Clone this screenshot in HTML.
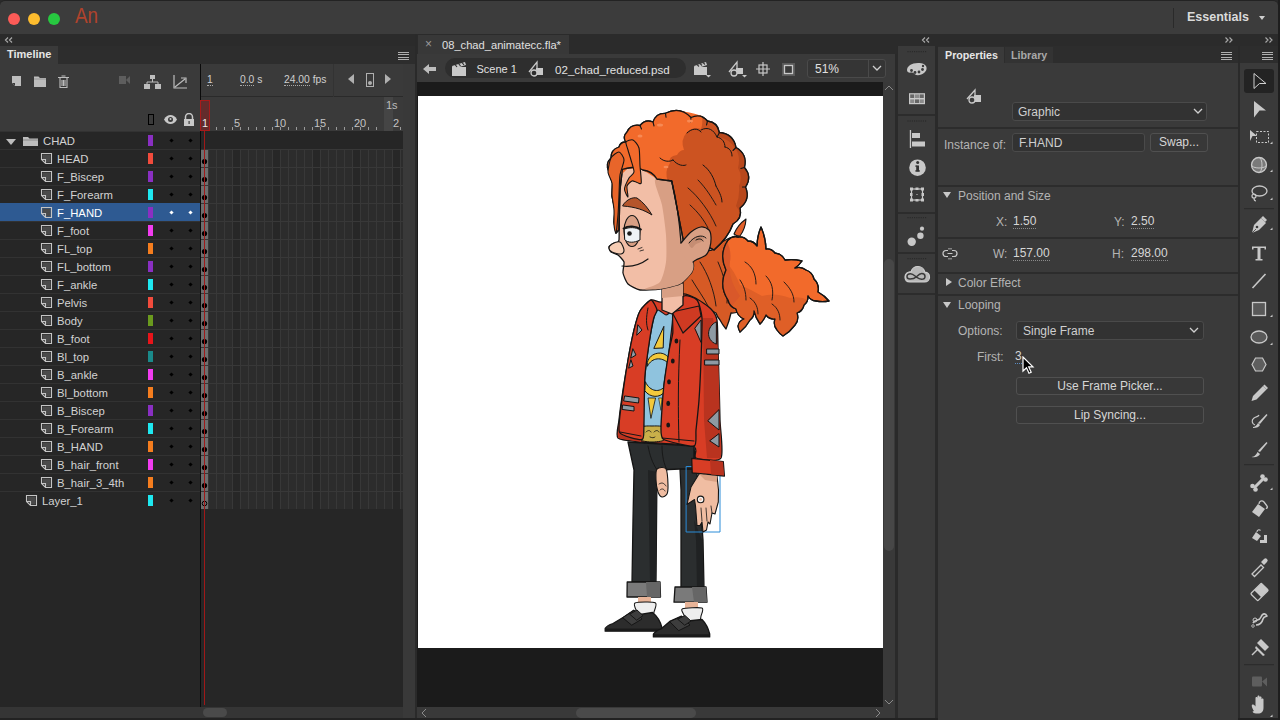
<!DOCTYPE html>
<html><head><meta charset="utf-8">
<style>
*{margin:0;padding:0;box-sizing:border-box}
html,body{width:1280px;height:720px;overflow:hidden;background:#2a2a2a;font-family:"Liberation Sans",sans-serif;color:#d6d6d6;font-size:12px}
.a{position:absolute}
#title{left:0;top:0;width:1278px;height:34px;background:#3c3c3c;border-top:1px solid #232323;border-radius:5px 5px 0 0}
.tl{position:absolute;top:12px;width:12px;height:12px;border-radius:50%}
.strip{background:#2b2b2b}
.panel{background:#3a3a3a}
.row{position:absolute;left:0;width:200px;height:18px;background:#262626;border-top:1px solid #323232}
.row.sel{background:#2e5a92;border-top-color:#2e5a92}
.row .lname{position:absolute;top:2.5px;font-size:11.3px;color:#d2d2d2;white-space:nowrap}
.row.sel .lname{color:#fff}
.row .sw{position:absolute;left:148px;top:3px;width:5px;height:11px}
.row .dot{position:absolute;top:7px;width:3px;height:3px;background:#000;transform:rotate(45deg)}
.row.sel .dot{background:#fff}
.row .d1{left:170px}.row .d2{left:189px}
.row .lic{position:absolute;top:2px}
.row .tri{position:absolute;left:6px;top:7px;width:0;height:0;border-left:5.5px solid transparent;border-right:5.5px solid transparent;border-top:6px solid #bdbdbd}
.row .fold{position:absolute;left:22px;top:3px}
.menu{position:absolute;width:11px;height:8px;background:repeating-linear-gradient(to bottom,#b0b0b0 0,#b0b0b0 1.1px,transparent 1.1px,transparent 2.3px)}
.chev{position:absolute;font-size:10px;color:#9a9a9a;letter-spacing:-1px}
.ptxt{position:absolute;font-size:12px;color:#cfcfcf;white-space:nowrap}
.lbl{position:absolute;font-size:12px;color:#b4b4b4;white-space:nowrap}
.val{position:absolute;font-size:12px;color:#d6d6d6;white-space:nowrap;border-bottom:1px dotted #8a8a8a;line-height:13px}
.field{position:absolute;background:#323232;border:1px solid #4a4a4a;border-radius:3px}
.btn{position:absolute;background:#383838;border:1px solid #505050;border-radius:3px;text-align:center;font-size:12px;color:#d6d6d6}
.sep{position:absolute;height:2px;background:#2c2c2c}
</style></head><body>
<!-- title bar -->
<div id="title" class="a">
 <div class="tl" style="left:8px;background:#fc5b57"></div>
 <div class="tl" style="left:28px;background:#fdbc2e"></div>
 <div class="tl" style="left:48px;background:#27c840"></div>
 <div class="a" style="left:75px;top:2px;font-size:22px;color:#b0432c;transform:scaleX(0.86);transform-origin:0 0">An</div>
 <div class="a" style="left:1173px;top:7px;width:1px;height:20px;background:#2a2a2a"></div>
 <div class="a" style="left:1187px;top:9px;font-size:12.5px;font-weight:bold;color:#dadada">Essentials</div>
 <div class="a" style="left:1259px;top:15px;border-left:3px solid transparent;border-right:3px solid transparent;border-top:4px solid #cfcfcf"></div>
</div>

<!-- ============ LEFT: Timeline ============ -->
<div class="a strip" style="left:0;top:34px;width:415px;height:12px"></div>
<svg class="a" style="left:4px;top:36px" width="10" height="8" viewBox="0 0 10 8"><path d="M4 1.5L1.5 4 4 6.5M8 1.5L5.5 4 8 6.5" stroke="#a8a8a8" stroke-width="1.2" fill="none"/></svg>
<div class="a" style="left:0;top:46px;width:415px;height:18px;background:#2d2d2d"></div>
<div class="a panel" style="left:0;top:46px;width:58px;height:18px"></div>
<div class="a" style="left:7px;top:48px;font-size:11px;font-weight:bold;color:#e6e6e6">Timeline</div>
<div class="menu" style="left:398px;top:52px"></div>
<div class="a panel" style="left:0;top:64px;width:200px;height:67px"></div>
<div class="a panel" style="left:201px;top:64px;width:202px;height:67px"></div>
<div class="a" style="left:200px;top:64px;width:1px;height:643px;background:#0a0a0a"></div>
<div class="a" style="left:201px;top:96px;width:202px;height:1px;background:#2a2a2a"></div>
<div class="a" style="left:333px;top:64px;width:1px;height:33px;background:#333"></div>
<!-- frame info -->
<div class="a" style="left:207px;top:74px;font-size:10.3px;color:#cfcfcf;border-bottom:1px dotted #aaa;line-height:11px">1</div>
<div class="a" style="left:240px;top:74px;font-size:10.3px;color:#cfcfcf;line-height:11px"><span style="border-bottom:1px dotted #aaa">0.0</span> s</div>
<div class="a" style="left:284px;top:74px;font-size:10.3px;color:#cfcfcf;line-height:11px"><span style="border-bottom:1px dotted #aaa">24.00</span> fps</div>
<div class="a" style="left:348px;top:74px;border-top:5px solid transparent;border-bottom:5px solid transparent;border-right:6px solid #b0b0b0"></div>
<div class="a" style="left:366px;top:73px;width:8px;height:14px;border:1px solid #b0b0b0"><div class="a" style="left:1px;top:7px;width:4px;height:4px;border-radius:50%;background:#b0b0b0"></div></div>
<div class="a" style="left:385px;top:74px;border-top:5px solid transparent;border-bottom:5px solid transparent;border-left:6px solid #b0b0b0"></div>
<!-- left toolbar icons -->
<svg class="a" style="left:10px;top:74px" width="60" height="16" viewBox="0 0 60 16">
 <path d="M2 2h9v10H5l-3-3z" fill="#bdbdbd"/><path d="M2 9l3 3V9z" fill="#3a3a3a"/>
 <path d="M24 2.5h4.5l1.5 1.5h6V13H24z" fill="#bdbdbd"/><path d="M24 5h12" stroke="#8e8e8e" stroke-width="0.8"/>
 <path d="M48 3.5h11M50 4v9.5h7V4M51.5 2h4M52 6v6M53.5 6v6M55 6v6" stroke="#bdbdbd" stroke-width="1.1" fill="none"/>
</svg>
<svg class="a" style="left:116px;top:73px" width="80" height="18" viewBox="0 0 80 18">
 <rect x="3" y="3" width="7" height="8" fill="#5e5e5e"/><path d="M10 7l4-4v8z" fill="#5e5e5e"/>
 <rect x="34" y="2" width="5" height="4" fill="#bdbdbd"/><path d="M36.5 6v3M31 9h11M31 9v3M42 9v3" stroke="#bdbdbd" stroke-width="1" fill="none"/><rect x="28" y="11" width="6" height="5" fill="#bdbdbd"/><rect x="39" y="11" width="6" height="5" fill="#bdbdbd"/>
 <path d="M58 2v13h13M59 14l10-8M65 5h5v5" stroke="#bdbdbd" stroke-width="1.2" fill="none"/>
</svg>
<!-- header column icons -->
<div class="a" style="left:148px;top:114px;width:6px;height:11px;border:1.5px solid #000"></div>
<svg class="a" style="left:163px;top:113px" width="34" height="14" viewBox="0 0 34 14">
 <path d="M1 6.5C3 3 5 2 7.5 2S12 3 14 6.5C12 10 10 11 7.5 11S3 10 1 6.5z" fill="#c8c8c8"/><circle cx="7.5" cy="6.5" r="2.5" fill="#3a3a3a"/><circle cx="7.5" cy="6" r="1" fill="#c8c8c8"/>
 <path d="M22.5 6V4a3.5 3.5 0 0 1 7 0v2" stroke="#c8c8c8" stroke-width="1.5" fill="none"/><rect x="21" y="6" width="10" height="7" fill="#c8c8c8"/><rect x="25.5" y="8" width="1.2" height="3" fill="#3a3a3a"/>
</svg>
<svg style="position:absolute;left:201px;top:97px" width="202" height="34"><rect x="15" y="30" width="1" height="3" fill="#9a9a9a"/><rect x="23" y="30" width="1" height="3" fill="#9a9a9a"/><rect x="31" y="30" width="1" height="3" fill="#9a9a9a"/><rect x="39" y="30" width="1" height="3" fill="#9a9a9a"/><rect x="47" y="30" width="1" height="3" fill="#9a9a9a"/><rect x="55" y="30" width="1" height="3" fill="#9a9a9a"/><rect x="63" y="30" width="1" height="3" fill="#9a9a9a"/><rect x="71" y="30" width="1" height="3" fill="#9a9a9a"/><rect x="79" y="30" width="1" height="3" fill="#9a9a9a"/><rect x="87" y="30" width="1" height="3" fill="#9a9a9a"/><rect x="95" y="30" width="1" height="3" fill="#9a9a9a"/><rect x="103" y="30" width="1" height="3" fill="#9a9a9a"/><rect x="111" y="30" width="1" height="3" fill="#9a9a9a"/><rect x="119" y="30" width="1" height="3" fill="#9a9a9a"/><rect x="127" y="30" width="1" height="3" fill="#9a9a9a"/><rect x="135" y="30" width="1" height="3" fill="#9a9a9a"/><rect x="143" y="30" width="1" height="3" fill="#9a9a9a"/><rect x="151" y="30" width="1" height="3" fill="#9a9a9a"/><rect x="159" y="30" width="1" height="3" fill="#9a9a9a"/><rect x="167" y="30" width="1" height="3" fill="#9a9a9a"/><rect x="175" y="30" width="1" height="3" fill="#9a9a9a"/><rect x="183" y="30" width="1" height="3" fill="#9a9a9a"/><rect x="191" y="30" width="1" height="3" fill="#9a9a9a"/><rect x="199" y="30" width="1" height="3" fill="#9a9a9a"/><rect x="207" y="30" width="1" height="3" fill="#9a9a9a"/></svg>
<div class="a" style="left:384px;top:97px;width:9px;height:34px;background:#454545"></div>
<div class="a" style="left:386px;top:99px;font-size:11px;color:#bdbdbd">1s</div>
<div class="a" style="left:200px;top:100px;width:10px;height:31px;border:1.5px solid #a81a1a;background:rgba(140,30,30,0.5)"></div>
<div class="a" style="left:201px;top:117px;font-size:11px;color:#c4c4c4;width:202px;height:14px">
 <span class="a" style="left:1px;color:#e8e8e8">1</span><span class="a" style="left:33px">5</span><span class="a" style="left:73px">10</span><span class="a" style="left:113px">15</span><span class="a" style="left:153px">20</span><span class="a" style="left:192px">2</span>
</div>
<!-- rows -->
<div class="row folder" style="top:131px"><div class="tri"></div><svg class="fold" width="17" height="12" viewBox="0 0 17 12"><path d="M1 2h5l1.5 1.5H16V11H1z" fill="#bdbdbd"/><path d="M1 5h15" stroke="#8a8a8a" stroke-width="1"/></svg><span class="lname" style="left:43px">CHAD</span><div class="sw" style="background:#8a2fc2"></div><div class="dot d1"></div><div class="dot d2"></div></div>
<div class="row" style="top:149px"><svg class="lic" style="left:40px" width="13" height="13" viewBox="0 0 13 13"><path d="M2.5 2.5h8v8h-4.5l-3.5-3.5z" fill="#4a4a4a"/><path d="M1.5 1.5h10v10h-6l-4-4z M5.5 11.5v-4h-4" fill="none" stroke="#c4c4c4" stroke-width="1.1"/></svg><span class="lname" style="left:57px">HEAD</span><div class="sw" style="background:#f24b3c"></div><div class="dot d1"></div><div class="dot d2"></div></div>
<div class="row" style="top:167px"><svg class="lic" style="left:40px" width="13" height="13" viewBox="0 0 13 13"><path d="M2.5 2.5h8v8h-4.5l-3.5-3.5z" fill="#4a4a4a"/><path d="M1.5 1.5h10v10h-6l-4-4z M5.5 11.5v-4h-4" fill="none" stroke="#c4c4c4" stroke-width="1.1"/></svg><span class="lname" style="left:57px">F_Biscep</span><div class="sw" style="background:#8a2fc2"></div><div class="dot d1"></div><div class="dot d2"></div></div>
<div class="row" style="top:185px"><svg class="lic" style="left:40px" width="13" height="13" viewBox="0 0 13 13"><path d="M2.5 2.5h8v8h-4.5l-3.5-3.5z" fill="#4a4a4a"/><path d="M1.5 1.5h10v10h-6l-4-4z M5.5 11.5v-4h-4" fill="none" stroke="#c4c4c4" stroke-width="1.1"/></svg><span class="lname" style="left:57px">F_Forearm</span><div class="sw" style="background:#1ee8f0"></div><div class="dot d1"></div><div class="dot d2"></div></div>
<div class="row sel" style="top:203px"><svg class="lic" style="left:40px" width="13" height="13" viewBox="0 0 13 13"><path d="M2.5 2.5h8v8h-4.5l-3.5-3.5z" fill="#4a4a4a"/><path d="M1.5 1.5h10v10h-6l-4-4z M5.5 11.5v-4h-4" fill="none" stroke="#c4c4c4" stroke-width="1.1"/></svg><span class="lname" style="left:57px">F_HAND</span><div class="sw" style="background:#8a2fc2"></div><div class="dot d1"></div><div class="dot d2"></div></div>
<div class="row" style="top:221px"><svg class="lic" style="left:40px" width="13" height="13" viewBox="0 0 13 13"><path d="M2.5 2.5h8v8h-4.5l-3.5-3.5z" fill="#4a4a4a"/><path d="M1.5 1.5h10v10h-6l-4-4z M5.5 11.5v-4h-4" fill="none" stroke="#c4c4c4" stroke-width="1.1"/></svg><span class="lname" style="left:57px">F_foot</span><div class="sw" style="background:#f23cf0"></div><div class="dot d1"></div><div class="dot d2"></div></div>
<div class="row" style="top:239px"><svg class="lic" style="left:40px" width="13" height="13" viewBox="0 0 13 13"><path d="M2.5 2.5h8v8h-4.5l-3.5-3.5z" fill="#4a4a4a"/><path d="M1.5 1.5h10v10h-6l-4-4z M5.5 11.5v-4h-4" fill="none" stroke="#c4c4c4" stroke-width="1.1"/></svg><span class="lname" style="left:57px">FL_top</span><div class="sw" style="background:#f57d1e"></div><div class="dot d1"></div><div class="dot d2"></div></div>
<div class="row" style="top:257px"><svg class="lic" style="left:40px" width="13" height="13" viewBox="0 0 13 13"><path d="M2.5 2.5h8v8h-4.5l-3.5-3.5z" fill="#4a4a4a"/><path d="M1.5 1.5h10v10h-6l-4-4z M5.5 11.5v-4h-4" fill="none" stroke="#c4c4c4" stroke-width="1.1"/></svg><span class="lname" style="left:57px">FL_bottom</span><div class="sw" style="background:#8a2fc2"></div><div class="dot d1"></div><div class="dot d2"></div></div>
<div class="row" style="top:275px"><svg class="lic" style="left:40px" width="13" height="13" viewBox="0 0 13 13"><path d="M2.5 2.5h8v8h-4.5l-3.5-3.5z" fill="#4a4a4a"/><path d="M1.5 1.5h10v10h-6l-4-4z M5.5 11.5v-4h-4" fill="none" stroke="#c4c4c4" stroke-width="1.1"/></svg><span class="lname" style="left:57px">F_ankle</span><div class="sw" style="background:#1ee8f0"></div><div class="dot d1"></div><div class="dot d2"></div></div>
<div class="row" style="top:293px"><svg class="lic" style="left:40px" width="13" height="13" viewBox="0 0 13 13"><path d="M2.5 2.5h8v8h-4.5l-3.5-3.5z" fill="#4a4a4a"/><path d="M1.5 1.5h10v10h-6l-4-4z M5.5 11.5v-4h-4" fill="none" stroke="#c4c4c4" stroke-width="1.1"/></svg><span class="lname" style="left:57px">Pelvis</span><div class="sw" style="background:#f24b3c"></div><div class="dot d1"></div><div class="dot d2"></div></div>
<div class="row" style="top:311px"><svg class="lic" style="left:40px" width="13" height="13" viewBox="0 0 13 13"><path d="M2.5 2.5h8v8h-4.5l-3.5-3.5z" fill="#4a4a4a"/><path d="M1.5 1.5h10v10h-6l-4-4z M5.5 11.5v-4h-4" fill="none" stroke="#c4c4c4" stroke-width="1.1"/></svg><span class="lname" style="left:57px">Body</span><div class="sw" style="background:#6a9a1e"></div><div class="dot d1"></div><div class="dot d2"></div></div>
<div class="row" style="top:329px"><svg class="lic" style="left:40px" width="13" height="13" viewBox="0 0 13 13"><path d="M2.5 2.5h8v8h-4.5l-3.5-3.5z" fill="#4a4a4a"/><path d="M1.5 1.5h10v10h-6l-4-4z M5.5 11.5v-4h-4" fill="none" stroke="#c4c4c4" stroke-width="1.1"/></svg><span class="lname" style="left:57px">B_foot</span><div class="sw" style="background:#e8141a"></div><div class="dot d1"></div><div class="dot d2"></div></div>
<div class="row" style="top:347px"><svg class="lic" style="left:40px" width="13" height="13" viewBox="0 0 13 13"><path d="M2.5 2.5h8v8h-4.5l-3.5-3.5z" fill="#4a4a4a"/><path d="M1.5 1.5h10v10h-6l-4-4z M5.5 11.5v-4h-4" fill="none" stroke="#c4c4c4" stroke-width="1.1"/></svg><span class="lname" style="left:57px">Bl_top</span><div class="sw" style="background:#1a8a8a"></div><div class="dot d1"></div><div class="dot d2"></div></div>
<div class="row" style="top:365px"><svg class="lic" style="left:40px" width="13" height="13" viewBox="0 0 13 13"><path d="M2.5 2.5h8v8h-4.5l-3.5-3.5z" fill="#4a4a4a"/><path d="M1.5 1.5h10v10h-6l-4-4z M5.5 11.5v-4h-4" fill="none" stroke="#c4c4c4" stroke-width="1.1"/></svg><span class="lname" style="left:57px">B_ankle</span><div class="sw" style="background:#f23cf0"></div><div class="dot d1"></div><div class="dot d2"></div></div>
<div class="row" style="top:383px"><svg class="lic" style="left:40px" width="13" height="13" viewBox="0 0 13 13"><path d="M2.5 2.5h8v8h-4.5l-3.5-3.5z" fill="#4a4a4a"/><path d="M1.5 1.5h10v10h-6l-4-4z M5.5 11.5v-4h-4" fill="none" stroke="#c4c4c4" stroke-width="1.1"/></svg><span class="lname" style="left:57px">Bl_bottom</span><div class="sw" style="background:#f57d1e"></div><div class="dot d1"></div><div class="dot d2"></div></div>
<div class="row" style="top:401px"><svg class="lic" style="left:40px" width="13" height="13" viewBox="0 0 13 13"><path d="M2.5 2.5h8v8h-4.5l-3.5-3.5z" fill="#4a4a4a"/><path d="M1.5 1.5h10v10h-6l-4-4z M5.5 11.5v-4h-4" fill="none" stroke="#c4c4c4" stroke-width="1.1"/></svg><span class="lname" style="left:57px">B_Biscep</span><div class="sw" style="background:#8a2fc2"></div><div class="dot d1"></div><div class="dot d2"></div></div>
<div class="row" style="top:419px"><svg class="lic" style="left:40px" width="13" height="13" viewBox="0 0 13 13"><path d="M2.5 2.5h8v8h-4.5l-3.5-3.5z" fill="#4a4a4a"/><path d="M1.5 1.5h10v10h-6l-4-4z M5.5 11.5v-4h-4" fill="none" stroke="#c4c4c4" stroke-width="1.1"/></svg><span class="lname" style="left:57px">B_Forearm</span><div class="sw" style="background:#1ee8f0"></div><div class="dot d1"></div><div class="dot d2"></div></div>
<div class="row" style="top:437px"><svg class="lic" style="left:40px" width="13" height="13" viewBox="0 0 13 13"><path d="M2.5 2.5h8v8h-4.5l-3.5-3.5z" fill="#4a4a4a"/><path d="M1.5 1.5h10v10h-6l-4-4z M5.5 11.5v-4h-4" fill="none" stroke="#c4c4c4" stroke-width="1.1"/></svg><span class="lname" style="left:57px">B_HAND</span><div class="sw" style="background:#f57d1e"></div><div class="dot d1"></div><div class="dot d2"></div></div>
<div class="row" style="top:455px"><svg class="lic" style="left:40px" width="13" height="13" viewBox="0 0 13 13"><path d="M2.5 2.5h8v8h-4.5l-3.5-3.5z" fill="#4a4a4a"/><path d="M1.5 1.5h10v10h-6l-4-4z M5.5 11.5v-4h-4" fill="none" stroke="#c4c4c4" stroke-width="1.1"/></svg><span class="lname" style="left:57px">B_hair_front</span><div class="sw" style="background:#f23cf0"></div><div class="dot d1"></div><div class="dot d2"></div></div>
<div class="row" style="top:473px"><svg class="lic" style="left:40px" width="13" height="13" viewBox="0 0 13 13"><path d="M2.5 2.5h8v8h-4.5l-3.5-3.5z" fill="#4a4a4a"/><path d="M1.5 1.5h10v10h-6l-4-4z M5.5 11.5v-4h-4" fill="none" stroke="#c4c4c4" stroke-width="1.1"/></svg><span class="lname" style="left:57px">B_hair_3_4th</span><div class="sw" style="background:#f57d1e"></div><div class="dot d1"></div><div class="dot d2"></div></div>
<div class="row" style="top:491px"><svg class="lic" style="left:25px" width="13" height="13" viewBox="0 0 13 13"><path d="M2.5 2.5h8v8h-4.5l-3.5-3.5z" fill="#4a4a4a"/><path d="M1.5 1.5h10v10h-6l-4-4z M5.5 11.5v-4h-4" fill="none" stroke="#c4c4c4" stroke-width="1.1"/></svg><span class="lname" style="left:42px">Layer_1</span><div class="sw" style="background:#1ee8f0"></div><div class="dot d1"></div><div class="dot d2"></div></div>
<svg style="position:absolute;left:201px;top:131px" width="202" height="378">
<rect x="0" y="0" width="202" height="18" fill="#262626"/>
<rect x="0" y="18" width="202" height="18" fill="#2c2c2c"/>
<rect x="32" y="18" width="8" height="18" fill="#272727"/>
<rect x="72" y="18" width="8" height="18" fill="#272727"/>
<rect x="112" y="18" width="8" height="18" fill="#272727"/>
<rect x="152" y="18" width="8" height="18" fill="#272727"/>
<rect x="192" y="18" width="8" height="18" fill="#272727"/>
<rect x="7" y="18" width="1" height="18" fill="#383838"/>
<rect x="15" y="18" width="1" height="18" fill="#383838"/>
<rect x="23" y="18" width="1" height="18" fill="#383838"/>
<rect x="31" y="18" width="1" height="18" fill="#383838"/>
<rect x="39" y="18" width="1" height="18" fill="#383838"/>
<rect x="47" y="18" width="1" height="18" fill="#383838"/>
<rect x="55" y="18" width="1" height="18" fill="#383838"/>
<rect x="63" y="18" width="1" height="18" fill="#383838"/>
<rect x="71" y="18" width="1" height="18" fill="#383838"/>
<rect x="79" y="18" width="1" height="18" fill="#383838"/>
<rect x="87" y="18" width="1" height="18" fill="#383838"/>
<rect x="95" y="18" width="1" height="18" fill="#383838"/>
<rect x="103" y="18" width="1" height="18" fill="#383838"/>
<rect x="111" y="18" width="1" height="18" fill="#383838"/>
<rect x="119" y="18" width="1" height="18" fill="#383838"/>
<rect x="127" y="18" width="1" height="18" fill="#383838"/>
<rect x="135" y="18" width="1" height="18" fill="#383838"/>
<rect x="143" y="18" width="1" height="18" fill="#383838"/>
<rect x="151" y="18" width="1" height="18" fill="#383838"/>
<rect x="159" y="18" width="1" height="18" fill="#383838"/>
<rect x="167" y="18" width="1" height="18" fill="#383838"/>
<rect x="175" y="18" width="1" height="18" fill="#383838"/>
<rect x="183" y="18" width="1" height="18" fill="#383838"/>
<rect x="191" y="18" width="1" height="18" fill="#383838"/>
<rect x="199" y="18" width="1" height="18" fill="#383838"/>
<rect x="207" y="18" width="1" height="18" fill="#383838"/>
<rect x="0" y="18" width="202" height="1" fill="#383838"/>
<rect x="0" y="19" width="7" height="17" fill="#6e6e6e"/>
<circle cx="3.5" cy="30.5" r="2.6" fill="#000"/>
<rect x="0" y="36" width="202" height="18" fill="#2c2c2c"/>
<rect x="32" y="36" width="8" height="18" fill="#272727"/>
<rect x="72" y="36" width="8" height="18" fill="#272727"/>
<rect x="112" y="36" width="8" height="18" fill="#272727"/>
<rect x="152" y="36" width="8" height="18" fill="#272727"/>
<rect x="192" y="36" width="8" height="18" fill="#272727"/>
<rect x="7" y="36" width="1" height="18" fill="#383838"/>
<rect x="15" y="36" width="1" height="18" fill="#383838"/>
<rect x="23" y="36" width="1" height="18" fill="#383838"/>
<rect x="31" y="36" width="1" height="18" fill="#383838"/>
<rect x="39" y="36" width="1" height="18" fill="#383838"/>
<rect x="47" y="36" width="1" height="18" fill="#383838"/>
<rect x="55" y="36" width="1" height="18" fill="#383838"/>
<rect x="63" y="36" width="1" height="18" fill="#383838"/>
<rect x="71" y="36" width="1" height="18" fill="#383838"/>
<rect x="79" y="36" width="1" height="18" fill="#383838"/>
<rect x="87" y="36" width="1" height="18" fill="#383838"/>
<rect x="95" y="36" width="1" height="18" fill="#383838"/>
<rect x="103" y="36" width="1" height="18" fill="#383838"/>
<rect x="111" y="36" width="1" height="18" fill="#383838"/>
<rect x="119" y="36" width="1" height="18" fill="#383838"/>
<rect x="127" y="36" width="1" height="18" fill="#383838"/>
<rect x="135" y="36" width="1" height="18" fill="#383838"/>
<rect x="143" y="36" width="1" height="18" fill="#383838"/>
<rect x="151" y="36" width="1" height="18" fill="#383838"/>
<rect x="159" y="36" width="1" height="18" fill="#383838"/>
<rect x="167" y="36" width="1" height="18" fill="#383838"/>
<rect x="175" y="36" width="1" height="18" fill="#383838"/>
<rect x="183" y="36" width="1" height="18" fill="#383838"/>
<rect x="191" y="36" width="1" height="18" fill="#383838"/>
<rect x="199" y="36" width="1" height="18" fill="#383838"/>
<rect x="207" y="36" width="1" height="18" fill="#383838"/>
<rect x="0" y="36" width="202" height="1" fill="#383838"/>
<rect x="0" y="37" width="7" height="17" fill="#6e6e6e"/>
<circle cx="3.5" cy="48.5" r="2.6" fill="#000"/>
<rect x="0" y="54" width="202" height="18" fill="#2c2c2c"/>
<rect x="32" y="54" width="8" height="18" fill="#272727"/>
<rect x="72" y="54" width="8" height="18" fill="#272727"/>
<rect x="112" y="54" width="8" height="18" fill="#272727"/>
<rect x="152" y="54" width="8" height="18" fill="#272727"/>
<rect x="192" y="54" width="8" height="18" fill="#272727"/>
<rect x="7" y="54" width="1" height="18" fill="#383838"/>
<rect x="15" y="54" width="1" height="18" fill="#383838"/>
<rect x="23" y="54" width="1" height="18" fill="#383838"/>
<rect x="31" y="54" width="1" height="18" fill="#383838"/>
<rect x="39" y="54" width="1" height="18" fill="#383838"/>
<rect x="47" y="54" width="1" height="18" fill="#383838"/>
<rect x="55" y="54" width="1" height="18" fill="#383838"/>
<rect x="63" y="54" width="1" height="18" fill="#383838"/>
<rect x="71" y="54" width="1" height="18" fill="#383838"/>
<rect x="79" y="54" width="1" height="18" fill="#383838"/>
<rect x="87" y="54" width="1" height="18" fill="#383838"/>
<rect x="95" y="54" width="1" height="18" fill="#383838"/>
<rect x="103" y="54" width="1" height="18" fill="#383838"/>
<rect x="111" y="54" width="1" height="18" fill="#383838"/>
<rect x="119" y="54" width="1" height="18" fill="#383838"/>
<rect x="127" y="54" width="1" height="18" fill="#383838"/>
<rect x="135" y="54" width="1" height="18" fill="#383838"/>
<rect x="143" y="54" width="1" height="18" fill="#383838"/>
<rect x="151" y="54" width="1" height="18" fill="#383838"/>
<rect x="159" y="54" width="1" height="18" fill="#383838"/>
<rect x="167" y="54" width="1" height="18" fill="#383838"/>
<rect x="175" y="54" width="1" height="18" fill="#383838"/>
<rect x="183" y="54" width="1" height="18" fill="#383838"/>
<rect x="191" y="54" width="1" height="18" fill="#383838"/>
<rect x="199" y="54" width="1" height="18" fill="#383838"/>
<rect x="207" y="54" width="1" height="18" fill="#383838"/>
<rect x="0" y="54" width="202" height="1" fill="#383838"/>
<rect x="0" y="55" width="7" height="17" fill="#6e6e6e"/>
<circle cx="3.5" cy="66.5" r="2.6" fill="#000"/>
<rect x="0" y="72" width="202" height="18" fill="#2c2c2c"/>
<rect x="32" y="72" width="8" height="18" fill="#272727"/>
<rect x="72" y="72" width="8" height="18" fill="#272727"/>
<rect x="112" y="72" width="8" height="18" fill="#272727"/>
<rect x="152" y="72" width="8" height="18" fill="#272727"/>
<rect x="192" y="72" width="8" height="18" fill="#272727"/>
<rect x="7" y="72" width="1" height="18" fill="#383838"/>
<rect x="15" y="72" width="1" height="18" fill="#383838"/>
<rect x="23" y="72" width="1" height="18" fill="#383838"/>
<rect x="31" y="72" width="1" height="18" fill="#383838"/>
<rect x="39" y="72" width="1" height="18" fill="#383838"/>
<rect x="47" y="72" width="1" height="18" fill="#383838"/>
<rect x="55" y="72" width="1" height="18" fill="#383838"/>
<rect x="63" y="72" width="1" height="18" fill="#383838"/>
<rect x="71" y="72" width="1" height="18" fill="#383838"/>
<rect x="79" y="72" width="1" height="18" fill="#383838"/>
<rect x="87" y="72" width="1" height="18" fill="#383838"/>
<rect x="95" y="72" width="1" height="18" fill="#383838"/>
<rect x="103" y="72" width="1" height="18" fill="#383838"/>
<rect x="111" y="72" width="1" height="18" fill="#383838"/>
<rect x="119" y="72" width="1" height="18" fill="#383838"/>
<rect x="127" y="72" width="1" height="18" fill="#383838"/>
<rect x="135" y="72" width="1" height="18" fill="#383838"/>
<rect x="143" y="72" width="1" height="18" fill="#383838"/>
<rect x="151" y="72" width="1" height="18" fill="#383838"/>
<rect x="159" y="72" width="1" height="18" fill="#383838"/>
<rect x="167" y="72" width="1" height="18" fill="#383838"/>
<rect x="175" y="72" width="1" height="18" fill="#383838"/>
<rect x="183" y="72" width="1" height="18" fill="#383838"/>
<rect x="191" y="72" width="1" height="18" fill="#383838"/>
<rect x="199" y="72" width="1" height="18" fill="#383838"/>
<rect x="207" y="72" width="1" height="18" fill="#383838"/>
<rect x="0" y="72" width="202" height="1" fill="#383838"/>
<rect x="0" y="73" width="7" height="17" fill="#6e6e6e"/>
<circle cx="3.5" cy="84.5" r="2.6" fill="#000"/>
<rect x="0" y="90" width="202" height="18" fill="#2c2c2c"/>
<rect x="32" y="90" width="8" height="18" fill="#272727"/>
<rect x="72" y="90" width="8" height="18" fill="#272727"/>
<rect x="112" y="90" width="8" height="18" fill="#272727"/>
<rect x="152" y="90" width="8" height="18" fill="#272727"/>
<rect x="192" y="90" width="8" height="18" fill="#272727"/>
<rect x="7" y="90" width="1" height="18" fill="#383838"/>
<rect x="15" y="90" width="1" height="18" fill="#383838"/>
<rect x="23" y="90" width="1" height="18" fill="#383838"/>
<rect x="31" y="90" width="1" height="18" fill="#383838"/>
<rect x="39" y="90" width="1" height="18" fill="#383838"/>
<rect x="47" y="90" width="1" height="18" fill="#383838"/>
<rect x="55" y="90" width="1" height="18" fill="#383838"/>
<rect x="63" y="90" width="1" height="18" fill="#383838"/>
<rect x="71" y="90" width="1" height="18" fill="#383838"/>
<rect x="79" y="90" width="1" height="18" fill="#383838"/>
<rect x="87" y="90" width="1" height="18" fill="#383838"/>
<rect x="95" y="90" width="1" height="18" fill="#383838"/>
<rect x="103" y="90" width="1" height="18" fill="#383838"/>
<rect x="111" y="90" width="1" height="18" fill="#383838"/>
<rect x="119" y="90" width="1" height="18" fill="#383838"/>
<rect x="127" y="90" width="1" height="18" fill="#383838"/>
<rect x="135" y="90" width="1" height="18" fill="#383838"/>
<rect x="143" y="90" width="1" height="18" fill="#383838"/>
<rect x="151" y="90" width="1" height="18" fill="#383838"/>
<rect x="159" y="90" width="1" height="18" fill="#383838"/>
<rect x="167" y="90" width="1" height="18" fill="#383838"/>
<rect x="175" y="90" width="1" height="18" fill="#383838"/>
<rect x="183" y="90" width="1" height="18" fill="#383838"/>
<rect x="191" y="90" width="1" height="18" fill="#383838"/>
<rect x="199" y="90" width="1" height="18" fill="#383838"/>
<rect x="207" y="90" width="1" height="18" fill="#383838"/>
<rect x="0" y="90" width="202" height="1" fill="#383838"/>
<rect x="0" y="91" width="7" height="17" fill="#6e6e6e"/>
<circle cx="3.5" cy="102.5" r="2.6" fill="#000"/>
<rect x="0" y="108" width="202" height="18" fill="#2c2c2c"/>
<rect x="32" y="108" width="8" height="18" fill="#272727"/>
<rect x="72" y="108" width="8" height="18" fill="#272727"/>
<rect x="112" y="108" width="8" height="18" fill="#272727"/>
<rect x="152" y="108" width="8" height="18" fill="#272727"/>
<rect x="192" y="108" width="8" height="18" fill="#272727"/>
<rect x="7" y="108" width="1" height="18" fill="#383838"/>
<rect x="15" y="108" width="1" height="18" fill="#383838"/>
<rect x="23" y="108" width="1" height="18" fill="#383838"/>
<rect x="31" y="108" width="1" height="18" fill="#383838"/>
<rect x="39" y="108" width="1" height="18" fill="#383838"/>
<rect x="47" y="108" width="1" height="18" fill="#383838"/>
<rect x="55" y="108" width="1" height="18" fill="#383838"/>
<rect x="63" y="108" width="1" height="18" fill="#383838"/>
<rect x="71" y="108" width="1" height="18" fill="#383838"/>
<rect x="79" y="108" width="1" height="18" fill="#383838"/>
<rect x="87" y="108" width="1" height="18" fill="#383838"/>
<rect x="95" y="108" width="1" height="18" fill="#383838"/>
<rect x="103" y="108" width="1" height="18" fill="#383838"/>
<rect x="111" y="108" width="1" height="18" fill="#383838"/>
<rect x="119" y="108" width="1" height="18" fill="#383838"/>
<rect x="127" y="108" width="1" height="18" fill="#383838"/>
<rect x="135" y="108" width="1" height="18" fill="#383838"/>
<rect x="143" y="108" width="1" height="18" fill="#383838"/>
<rect x="151" y="108" width="1" height="18" fill="#383838"/>
<rect x="159" y="108" width="1" height="18" fill="#383838"/>
<rect x="167" y="108" width="1" height="18" fill="#383838"/>
<rect x="175" y="108" width="1" height="18" fill="#383838"/>
<rect x="183" y="108" width="1" height="18" fill="#383838"/>
<rect x="191" y="108" width="1" height="18" fill="#383838"/>
<rect x="199" y="108" width="1" height="18" fill="#383838"/>
<rect x="207" y="108" width="1" height="18" fill="#383838"/>
<rect x="0" y="108" width="202" height="1" fill="#383838"/>
<rect x="0" y="109" width="7" height="17" fill="#6e6e6e"/>
<circle cx="3.5" cy="120.5" r="2.6" fill="#000"/>
<rect x="0" y="126" width="202" height="18" fill="#2c2c2c"/>
<rect x="32" y="126" width="8" height="18" fill="#272727"/>
<rect x="72" y="126" width="8" height="18" fill="#272727"/>
<rect x="112" y="126" width="8" height="18" fill="#272727"/>
<rect x="152" y="126" width="8" height="18" fill="#272727"/>
<rect x="192" y="126" width="8" height="18" fill="#272727"/>
<rect x="7" y="126" width="1" height="18" fill="#383838"/>
<rect x="15" y="126" width="1" height="18" fill="#383838"/>
<rect x="23" y="126" width="1" height="18" fill="#383838"/>
<rect x="31" y="126" width="1" height="18" fill="#383838"/>
<rect x="39" y="126" width="1" height="18" fill="#383838"/>
<rect x="47" y="126" width="1" height="18" fill="#383838"/>
<rect x="55" y="126" width="1" height="18" fill="#383838"/>
<rect x="63" y="126" width="1" height="18" fill="#383838"/>
<rect x="71" y="126" width="1" height="18" fill="#383838"/>
<rect x="79" y="126" width="1" height="18" fill="#383838"/>
<rect x="87" y="126" width="1" height="18" fill="#383838"/>
<rect x="95" y="126" width="1" height="18" fill="#383838"/>
<rect x="103" y="126" width="1" height="18" fill="#383838"/>
<rect x="111" y="126" width="1" height="18" fill="#383838"/>
<rect x="119" y="126" width="1" height="18" fill="#383838"/>
<rect x="127" y="126" width="1" height="18" fill="#383838"/>
<rect x="135" y="126" width="1" height="18" fill="#383838"/>
<rect x="143" y="126" width="1" height="18" fill="#383838"/>
<rect x="151" y="126" width="1" height="18" fill="#383838"/>
<rect x="159" y="126" width="1" height="18" fill="#383838"/>
<rect x="167" y="126" width="1" height="18" fill="#383838"/>
<rect x="175" y="126" width="1" height="18" fill="#383838"/>
<rect x="183" y="126" width="1" height="18" fill="#383838"/>
<rect x="191" y="126" width="1" height="18" fill="#383838"/>
<rect x="199" y="126" width="1" height="18" fill="#383838"/>
<rect x="207" y="126" width="1" height="18" fill="#383838"/>
<rect x="0" y="126" width="202" height="1" fill="#383838"/>
<rect x="0" y="127" width="7" height="17" fill="#6e6e6e"/>
<circle cx="3.5" cy="138.5" r="2.6" fill="#000"/>
<rect x="0" y="144" width="202" height="18" fill="#2c2c2c"/>
<rect x="32" y="144" width="8" height="18" fill="#272727"/>
<rect x="72" y="144" width="8" height="18" fill="#272727"/>
<rect x="112" y="144" width="8" height="18" fill="#272727"/>
<rect x="152" y="144" width="8" height="18" fill="#272727"/>
<rect x="192" y="144" width="8" height="18" fill="#272727"/>
<rect x="7" y="144" width="1" height="18" fill="#383838"/>
<rect x="15" y="144" width="1" height="18" fill="#383838"/>
<rect x="23" y="144" width="1" height="18" fill="#383838"/>
<rect x="31" y="144" width="1" height="18" fill="#383838"/>
<rect x="39" y="144" width="1" height="18" fill="#383838"/>
<rect x="47" y="144" width="1" height="18" fill="#383838"/>
<rect x="55" y="144" width="1" height="18" fill="#383838"/>
<rect x="63" y="144" width="1" height="18" fill="#383838"/>
<rect x="71" y="144" width="1" height="18" fill="#383838"/>
<rect x="79" y="144" width="1" height="18" fill="#383838"/>
<rect x="87" y="144" width="1" height="18" fill="#383838"/>
<rect x="95" y="144" width="1" height="18" fill="#383838"/>
<rect x="103" y="144" width="1" height="18" fill="#383838"/>
<rect x="111" y="144" width="1" height="18" fill="#383838"/>
<rect x="119" y="144" width="1" height="18" fill="#383838"/>
<rect x="127" y="144" width="1" height="18" fill="#383838"/>
<rect x="135" y="144" width="1" height="18" fill="#383838"/>
<rect x="143" y="144" width="1" height="18" fill="#383838"/>
<rect x="151" y="144" width="1" height="18" fill="#383838"/>
<rect x="159" y="144" width="1" height="18" fill="#383838"/>
<rect x="167" y="144" width="1" height="18" fill="#383838"/>
<rect x="175" y="144" width="1" height="18" fill="#383838"/>
<rect x="183" y="144" width="1" height="18" fill="#383838"/>
<rect x="191" y="144" width="1" height="18" fill="#383838"/>
<rect x="199" y="144" width="1" height="18" fill="#383838"/>
<rect x="207" y="144" width="1" height="18" fill="#383838"/>
<rect x="0" y="144" width="202" height="1" fill="#383838"/>
<rect x="0" y="145" width="7" height="17" fill="#6e6e6e"/>
<circle cx="3.5" cy="156.5" r="2.6" fill="#000"/>
<rect x="0" y="162" width="202" height="18" fill="#2c2c2c"/>
<rect x="32" y="162" width="8" height="18" fill="#272727"/>
<rect x="72" y="162" width="8" height="18" fill="#272727"/>
<rect x="112" y="162" width="8" height="18" fill="#272727"/>
<rect x="152" y="162" width="8" height="18" fill="#272727"/>
<rect x="192" y="162" width="8" height="18" fill="#272727"/>
<rect x="7" y="162" width="1" height="18" fill="#383838"/>
<rect x="15" y="162" width="1" height="18" fill="#383838"/>
<rect x="23" y="162" width="1" height="18" fill="#383838"/>
<rect x="31" y="162" width="1" height="18" fill="#383838"/>
<rect x="39" y="162" width="1" height="18" fill="#383838"/>
<rect x="47" y="162" width="1" height="18" fill="#383838"/>
<rect x="55" y="162" width="1" height="18" fill="#383838"/>
<rect x="63" y="162" width="1" height="18" fill="#383838"/>
<rect x="71" y="162" width="1" height="18" fill="#383838"/>
<rect x="79" y="162" width="1" height="18" fill="#383838"/>
<rect x="87" y="162" width="1" height="18" fill="#383838"/>
<rect x="95" y="162" width="1" height="18" fill="#383838"/>
<rect x="103" y="162" width="1" height="18" fill="#383838"/>
<rect x="111" y="162" width="1" height="18" fill="#383838"/>
<rect x="119" y="162" width="1" height="18" fill="#383838"/>
<rect x="127" y="162" width="1" height="18" fill="#383838"/>
<rect x="135" y="162" width="1" height="18" fill="#383838"/>
<rect x="143" y="162" width="1" height="18" fill="#383838"/>
<rect x="151" y="162" width="1" height="18" fill="#383838"/>
<rect x="159" y="162" width="1" height="18" fill="#383838"/>
<rect x="167" y="162" width="1" height="18" fill="#383838"/>
<rect x="175" y="162" width="1" height="18" fill="#383838"/>
<rect x="183" y="162" width="1" height="18" fill="#383838"/>
<rect x="191" y="162" width="1" height="18" fill="#383838"/>
<rect x="199" y="162" width="1" height="18" fill="#383838"/>
<rect x="207" y="162" width="1" height="18" fill="#383838"/>
<rect x="0" y="162" width="202" height="1" fill="#383838"/>
<rect x="0" y="163" width="7" height="17" fill="#6e6e6e"/>
<circle cx="3.5" cy="174.5" r="2.6" fill="#000"/>
<rect x="0" y="180" width="202" height="18" fill="#2c2c2c"/>
<rect x="32" y="180" width="8" height="18" fill="#272727"/>
<rect x="72" y="180" width="8" height="18" fill="#272727"/>
<rect x="112" y="180" width="8" height="18" fill="#272727"/>
<rect x="152" y="180" width="8" height="18" fill="#272727"/>
<rect x="192" y="180" width="8" height="18" fill="#272727"/>
<rect x="7" y="180" width="1" height="18" fill="#383838"/>
<rect x="15" y="180" width="1" height="18" fill="#383838"/>
<rect x="23" y="180" width="1" height="18" fill="#383838"/>
<rect x="31" y="180" width="1" height="18" fill="#383838"/>
<rect x="39" y="180" width="1" height="18" fill="#383838"/>
<rect x="47" y="180" width="1" height="18" fill="#383838"/>
<rect x="55" y="180" width="1" height="18" fill="#383838"/>
<rect x="63" y="180" width="1" height="18" fill="#383838"/>
<rect x="71" y="180" width="1" height="18" fill="#383838"/>
<rect x="79" y="180" width="1" height="18" fill="#383838"/>
<rect x="87" y="180" width="1" height="18" fill="#383838"/>
<rect x="95" y="180" width="1" height="18" fill="#383838"/>
<rect x="103" y="180" width="1" height="18" fill="#383838"/>
<rect x="111" y="180" width="1" height="18" fill="#383838"/>
<rect x="119" y="180" width="1" height="18" fill="#383838"/>
<rect x="127" y="180" width="1" height="18" fill="#383838"/>
<rect x="135" y="180" width="1" height="18" fill="#383838"/>
<rect x="143" y="180" width="1" height="18" fill="#383838"/>
<rect x="151" y="180" width="1" height="18" fill="#383838"/>
<rect x="159" y="180" width="1" height="18" fill="#383838"/>
<rect x="167" y="180" width="1" height="18" fill="#383838"/>
<rect x="175" y="180" width="1" height="18" fill="#383838"/>
<rect x="183" y="180" width="1" height="18" fill="#383838"/>
<rect x="191" y="180" width="1" height="18" fill="#383838"/>
<rect x="199" y="180" width="1" height="18" fill="#383838"/>
<rect x="207" y="180" width="1" height="18" fill="#383838"/>
<rect x="0" y="180" width="202" height="1" fill="#383838"/>
<rect x="0" y="181" width="7" height="17" fill="#6e6e6e"/>
<circle cx="3.5" cy="192.5" r="2.6" fill="#000"/>
<rect x="0" y="198" width="202" height="18" fill="#2c2c2c"/>
<rect x="32" y="198" width="8" height="18" fill="#272727"/>
<rect x="72" y="198" width="8" height="18" fill="#272727"/>
<rect x="112" y="198" width="8" height="18" fill="#272727"/>
<rect x="152" y="198" width="8" height="18" fill="#272727"/>
<rect x="192" y="198" width="8" height="18" fill="#272727"/>
<rect x="7" y="198" width="1" height="18" fill="#383838"/>
<rect x="15" y="198" width="1" height="18" fill="#383838"/>
<rect x="23" y="198" width="1" height="18" fill="#383838"/>
<rect x="31" y="198" width="1" height="18" fill="#383838"/>
<rect x="39" y="198" width="1" height="18" fill="#383838"/>
<rect x="47" y="198" width="1" height="18" fill="#383838"/>
<rect x="55" y="198" width="1" height="18" fill="#383838"/>
<rect x="63" y="198" width="1" height="18" fill="#383838"/>
<rect x="71" y="198" width="1" height="18" fill="#383838"/>
<rect x="79" y="198" width="1" height="18" fill="#383838"/>
<rect x="87" y="198" width="1" height="18" fill="#383838"/>
<rect x="95" y="198" width="1" height="18" fill="#383838"/>
<rect x="103" y="198" width="1" height="18" fill="#383838"/>
<rect x="111" y="198" width="1" height="18" fill="#383838"/>
<rect x="119" y="198" width="1" height="18" fill="#383838"/>
<rect x="127" y="198" width="1" height="18" fill="#383838"/>
<rect x="135" y="198" width="1" height="18" fill="#383838"/>
<rect x="143" y="198" width="1" height="18" fill="#383838"/>
<rect x="151" y="198" width="1" height="18" fill="#383838"/>
<rect x="159" y="198" width="1" height="18" fill="#383838"/>
<rect x="167" y="198" width="1" height="18" fill="#383838"/>
<rect x="175" y="198" width="1" height="18" fill="#383838"/>
<rect x="183" y="198" width="1" height="18" fill="#383838"/>
<rect x="191" y="198" width="1" height="18" fill="#383838"/>
<rect x="199" y="198" width="1" height="18" fill="#383838"/>
<rect x="207" y="198" width="1" height="18" fill="#383838"/>
<rect x="0" y="198" width="202" height="1" fill="#383838"/>
<rect x="0" y="199" width="7" height="17" fill="#6e6e6e"/>
<circle cx="3.5" cy="210.5" r="2.6" fill="#000"/>
<rect x="0" y="216" width="202" height="18" fill="#2c2c2c"/>
<rect x="32" y="216" width="8" height="18" fill="#272727"/>
<rect x="72" y="216" width="8" height="18" fill="#272727"/>
<rect x="112" y="216" width="8" height="18" fill="#272727"/>
<rect x="152" y="216" width="8" height="18" fill="#272727"/>
<rect x="192" y="216" width="8" height="18" fill="#272727"/>
<rect x="7" y="216" width="1" height="18" fill="#383838"/>
<rect x="15" y="216" width="1" height="18" fill="#383838"/>
<rect x="23" y="216" width="1" height="18" fill="#383838"/>
<rect x="31" y="216" width="1" height="18" fill="#383838"/>
<rect x="39" y="216" width="1" height="18" fill="#383838"/>
<rect x="47" y="216" width="1" height="18" fill="#383838"/>
<rect x="55" y="216" width="1" height="18" fill="#383838"/>
<rect x="63" y="216" width="1" height="18" fill="#383838"/>
<rect x="71" y="216" width="1" height="18" fill="#383838"/>
<rect x="79" y="216" width="1" height="18" fill="#383838"/>
<rect x="87" y="216" width="1" height="18" fill="#383838"/>
<rect x="95" y="216" width="1" height="18" fill="#383838"/>
<rect x="103" y="216" width="1" height="18" fill="#383838"/>
<rect x="111" y="216" width="1" height="18" fill="#383838"/>
<rect x="119" y="216" width="1" height="18" fill="#383838"/>
<rect x="127" y="216" width="1" height="18" fill="#383838"/>
<rect x="135" y="216" width="1" height="18" fill="#383838"/>
<rect x="143" y="216" width="1" height="18" fill="#383838"/>
<rect x="151" y="216" width="1" height="18" fill="#383838"/>
<rect x="159" y="216" width="1" height="18" fill="#383838"/>
<rect x="167" y="216" width="1" height="18" fill="#383838"/>
<rect x="175" y="216" width="1" height="18" fill="#383838"/>
<rect x="183" y="216" width="1" height="18" fill="#383838"/>
<rect x="191" y="216" width="1" height="18" fill="#383838"/>
<rect x="199" y="216" width="1" height="18" fill="#383838"/>
<rect x="207" y="216" width="1" height="18" fill="#383838"/>
<rect x="0" y="216" width="202" height="1" fill="#383838"/>
<rect x="0" y="217" width="7" height="17" fill="#6e6e6e"/>
<circle cx="3.5" cy="228.5" r="2.6" fill="#000"/>
<rect x="0" y="234" width="202" height="18" fill="#2c2c2c"/>
<rect x="32" y="234" width="8" height="18" fill="#272727"/>
<rect x="72" y="234" width="8" height="18" fill="#272727"/>
<rect x="112" y="234" width="8" height="18" fill="#272727"/>
<rect x="152" y="234" width="8" height="18" fill="#272727"/>
<rect x="192" y="234" width="8" height="18" fill="#272727"/>
<rect x="7" y="234" width="1" height="18" fill="#383838"/>
<rect x="15" y="234" width="1" height="18" fill="#383838"/>
<rect x="23" y="234" width="1" height="18" fill="#383838"/>
<rect x="31" y="234" width="1" height="18" fill="#383838"/>
<rect x="39" y="234" width="1" height="18" fill="#383838"/>
<rect x="47" y="234" width="1" height="18" fill="#383838"/>
<rect x="55" y="234" width="1" height="18" fill="#383838"/>
<rect x="63" y="234" width="1" height="18" fill="#383838"/>
<rect x="71" y="234" width="1" height="18" fill="#383838"/>
<rect x="79" y="234" width="1" height="18" fill="#383838"/>
<rect x="87" y="234" width="1" height="18" fill="#383838"/>
<rect x="95" y="234" width="1" height="18" fill="#383838"/>
<rect x="103" y="234" width="1" height="18" fill="#383838"/>
<rect x="111" y="234" width="1" height="18" fill="#383838"/>
<rect x="119" y="234" width="1" height="18" fill="#383838"/>
<rect x="127" y="234" width="1" height="18" fill="#383838"/>
<rect x="135" y="234" width="1" height="18" fill="#383838"/>
<rect x="143" y="234" width="1" height="18" fill="#383838"/>
<rect x="151" y="234" width="1" height="18" fill="#383838"/>
<rect x="159" y="234" width="1" height="18" fill="#383838"/>
<rect x="167" y="234" width="1" height="18" fill="#383838"/>
<rect x="175" y="234" width="1" height="18" fill="#383838"/>
<rect x="183" y="234" width="1" height="18" fill="#383838"/>
<rect x="191" y="234" width="1" height="18" fill="#383838"/>
<rect x="199" y="234" width="1" height="18" fill="#383838"/>
<rect x="207" y="234" width="1" height="18" fill="#383838"/>
<rect x="0" y="234" width="202" height="1" fill="#383838"/>
<rect x="0" y="235" width="7" height="17" fill="#6e6e6e"/>
<circle cx="3.5" cy="246.5" r="2.6" fill="#000"/>
<rect x="0" y="252" width="202" height="18" fill="#2c2c2c"/>
<rect x="32" y="252" width="8" height="18" fill="#272727"/>
<rect x="72" y="252" width="8" height="18" fill="#272727"/>
<rect x="112" y="252" width="8" height="18" fill="#272727"/>
<rect x="152" y="252" width="8" height="18" fill="#272727"/>
<rect x="192" y="252" width="8" height="18" fill="#272727"/>
<rect x="7" y="252" width="1" height="18" fill="#383838"/>
<rect x="15" y="252" width="1" height="18" fill="#383838"/>
<rect x="23" y="252" width="1" height="18" fill="#383838"/>
<rect x="31" y="252" width="1" height="18" fill="#383838"/>
<rect x="39" y="252" width="1" height="18" fill="#383838"/>
<rect x="47" y="252" width="1" height="18" fill="#383838"/>
<rect x="55" y="252" width="1" height="18" fill="#383838"/>
<rect x="63" y="252" width="1" height="18" fill="#383838"/>
<rect x="71" y="252" width="1" height="18" fill="#383838"/>
<rect x="79" y="252" width="1" height="18" fill="#383838"/>
<rect x="87" y="252" width="1" height="18" fill="#383838"/>
<rect x="95" y="252" width="1" height="18" fill="#383838"/>
<rect x="103" y="252" width="1" height="18" fill="#383838"/>
<rect x="111" y="252" width="1" height="18" fill="#383838"/>
<rect x="119" y="252" width="1" height="18" fill="#383838"/>
<rect x="127" y="252" width="1" height="18" fill="#383838"/>
<rect x="135" y="252" width="1" height="18" fill="#383838"/>
<rect x="143" y="252" width="1" height="18" fill="#383838"/>
<rect x="151" y="252" width="1" height="18" fill="#383838"/>
<rect x="159" y="252" width="1" height="18" fill="#383838"/>
<rect x="167" y="252" width="1" height="18" fill="#383838"/>
<rect x="175" y="252" width="1" height="18" fill="#383838"/>
<rect x="183" y="252" width="1" height="18" fill="#383838"/>
<rect x="191" y="252" width="1" height="18" fill="#383838"/>
<rect x="199" y="252" width="1" height="18" fill="#383838"/>
<rect x="207" y="252" width="1" height="18" fill="#383838"/>
<rect x="0" y="252" width="202" height="1" fill="#383838"/>
<rect x="0" y="253" width="7" height="17" fill="#6e6e6e"/>
<circle cx="3.5" cy="264.5" r="2.6" fill="#000"/>
<rect x="0" y="270" width="202" height="18" fill="#2c2c2c"/>
<rect x="32" y="270" width="8" height="18" fill="#272727"/>
<rect x="72" y="270" width="8" height="18" fill="#272727"/>
<rect x="112" y="270" width="8" height="18" fill="#272727"/>
<rect x="152" y="270" width="8" height="18" fill="#272727"/>
<rect x="192" y="270" width="8" height="18" fill="#272727"/>
<rect x="7" y="270" width="1" height="18" fill="#383838"/>
<rect x="15" y="270" width="1" height="18" fill="#383838"/>
<rect x="23" y="270" width="1" height="18" fill="#383838"/>
<rect x="31" y="270" width="1" height="18" fill="#383838"/>
<rect x="39" y="270" width="1" height="18" fill="#383838"/>
<rect x="47" y="270" width="1" height="18" fill="#383838"/>
<rect x="55" y="270" width="1" height="18" fill="#383838"/>
<rect x="63" y="270" width="1" height="18" fill="#383838"/>
<rect x="71" y="270" width="1" height="18" fill="#383838"/>
<rect x="79" y="270" width="1" height="18" fill="#383838"/>
<rect x="87" y="270" width="1" height="18" fill="#383838"/>
<rect x="95" y="270" width="1" height="18" fill="#383838"/>
<rect x="103" y="270" width="1" height="18" fill="#383838"/>
<rect x="111" y="270" width="1" height="18" fill="#383838"/>
<rect x="119" y="270" width="1" height="18" fill="#383838"/>
<rect x="127" y="270" width="1" height="18" fill="#383838"/>
<rect x="135" y="270" width="1" height="18" fill="#383838"/>
<rect x="143" y="270" width="1" height="18" fill="#383838"/>
<rect x="151" y="270" width="1" height="18" fill="#383838"/>
<rect x="159" y="270" width="1" height="18" fill="#383838"/>
<rect x="167" y="270" width="1" height="18" fill="#383838"/>
<rect x="175" y="270" width="1" height="18" fill="#383838"/>
<rect x="183" y="270" width="1" height="18" fill="#383838"/>
<rect x="191" y="270" width="1" height="18" fill="#383838"/>
<rect x="199" y="270" width="1" height="18" fill="#383838"/>
<rect x="207" y="270" width="1" height="18" fill="#383838"/>
<rect x="0" y="270" width="202" height="1" fill="#383838"/>
<rect x="0" y="271" width="7" height="17" fill="#6e6e6e"/>
<circle cx="3.5" cy="282.5" r="2.6" fill="#000"/>
<rect x="0" y="288" width="202" height="18" fill="#2c2c2c"/>
<rect x="32" y="288" width="8" height="18" fill="#272727"/>
<rect x="72" y="288" width="8" height="18" fill="#272727"/>
<rect x="112" y="288" width="8" height="18" fill="#272727"/>
<rect x="152" y="288" width="8" height="18" fill="#272727"/>
<rect x="192" y="288" width="8" height="18" fill="#272727"/>
<rect x="7" y="288" width="1" height="18" fill="#383838"/>
<rect x="15" y="288" width="1" height="18" fill="#383838"/>
<rect x="23" y="288" width="1" height="18" fill="#383838"/>
<rect x="31" y="288" width="1" height="18" fill="#383838"/>
<rect x="39" y="288" width="1" height="18" fill="#383838"/>
<rect x="47" y="288" width="1" height="18" fill="#383838"/>
<rect x="55" y="288" width="1" height="18" fill="#383838"/>
<rect x="63" y="288" width="1" height="18" fill="#383838"/>
<rect x="71" y="288" width="1" height="18" fill="#383838"/>
<rect x="79" y="288" width="1" height="18" fill="#383838"/>
<rect x="87" y="288" width="1" height="18" fill="#383838"/>
<rect x="95" y="288" width="1" height="18" fill="#383838"/>
<rect x="103" y="288" width="1" height="18" fill="#383838"/>
<rect x="111" y="288" width="1" height="18" fill="#383838"/>
<rect x="119" y="288" width="1" height="18" fill="#383838"/>
<rect x="127" y="288" width="1" height="18" fill="#383838"/>
<rect x="135" y="288" width="1" height="18" fill="#383838"/>
<rect x="143" y="288" width="1" height="18" fill="#383838"/>
<rect x="151" y="288" width="1" height="18" fill="#383838"/>
<rect x="159" y="288" width="1" height="18" fill="#383838"/>
<rect x="167" y="288" width="1" height="18" fill="#383838"/>
<rect x="175" y="288" width="1" height="18" fill="#383838"/>
<rect x="183" y="288" width="1" height="18" fill="#383838"/>
<rect x="191" y="288" width="1" height="18" fill="#383838"/>
<rect x="199" y="288" width="1" height="18" fill="#383838"/>
<rect x="207" y="288" width="1" height="18" fill="#383838"/>
<rect x="0" y="288" width="202" height="1" fill="#383838"/>
<rect x="0" y="289" width="7" height="17" fill="#6e6e6e"/>
<circle cx="3.5" cy="300.5" r="2.6" fill="#000"/>
<rect x="0" y="306" width="202" height="18" fill="#2c2c2c"/>
<rect x="32" y="306" width="8" height="18" fill="#272727"/>
<rect x="72" y="306" width="8" height="18" fill="#272727"/>
<rect x="112" y="306" width="8" height="18" fill="#272727"/>
<rect x="152" y="306" width="8" height="18" fill="#272727"/>
<rect x="192" y="306" width="8" height="18" fill="#272727"/>
<rect x="7" y="306" width="1" height="18" fill="#383838"/>
<rect x="15" y="306" width="1" height="18" fill="#383838"/>
<rect x="23" y="306" width="1" height="18" fill="#383838"/>
<rect x="31" y="306" width="1" height="18" fill="#383838"/>
<rect x="39" y="306" width="1" height="18" fill="#383838"/>
<rect x="47" y="306" width="1" height="18" fill="#383838"/>
<rect x="55" y="306" width="1" height="18" fill="#383838"/>
<rect x="63" y="306" width="1" height="18" fill="#383838"/>
<rect x="71" y="306" width="1" height="18" fill="#383838"/>
<rect x="79" y="306" width="1" height="18" fill="#383838"/>
<rect x="87" y="306" width="1" height="18" fill="#383838"/>
<rect x="95" y="306" width="1" height="18" fill="#383838"/>
<rect x="103" y="306" width="1" height="18" fill="#383838"/>
<rect x="111" y="306" width="1" height="18" fill="#383838"/>
<rect x="119" y="306" width="1" height="18" fill="#383838"/>
<rect x="127" y="306" width="1" height="18" fill="#383838"/>
<rect x="135" y="306" width="1" height="18" fill="#383838"/>
<rect x="143" y="306" width="1" height="18" fill="#383838"/>
<rect x="151" y="306" width="1" height="18" fill="#383838"/>
<rect x="159" y="306" width="1" height="18" fill="#383838"/>
<rect x="167" y="306" width="1" height="18" fill="#383838"/>
<rect x="175" y="306" width="1" height="18" fill="#383838"/>
<rect x="183" y="306" width="1" height="18" fill="#383838"/>
<rect x="191" y="306" width="1" height="18" fill="#383838"/>
<rect x="199" y="306" width="1" height="18" fill="#383838"/>
<rect x="207" y="306" width="1" height="18" fill="#383838"/>
<rect x="0" y="306" width="202" height="1" fill="#383838"/>
<rect x="0" y="307" width="7" height="17" fill="#6e6e6e"/>
<circle cx="3.5" cy="318.5" r="2.6" fill="#000"/>
<rect x="0" y="324" width="202" height="18" fill="#2c2c2c"/>
<rect x="32" y="324" width="8" height="18" fill="#272727"/>
<rect x="72" y="324" width="8" height="18" fill="#272727"/>
<rect x="112" y="324" width="8" height="18" fill="#272727"/>
<rect x="152" y="324" width="8" height="18" fill="#272727"/>
<rect x="192" y="324" width="8" height="18" fill="#272727"/>
<rect x="7" y="324" width="1" height="18" fill="#383838"/>
<rect x="15" y="324" width="1" height="18" fill="#383838"/>
<rect x="23" y="324" width="1" height="18" fill="#383838"/>
<rect x="31" y="324" width="1" height="18" fill="#383838"/>
<rect x="39" y="324" width="1" height="18" fill="#383838"/>
<rect x="47" y="324" width="1" height="18" fill="#383838"/>
<rect x="55" y="324" width="1" height="18" fill="#383838"/>
<rect x="63" y="324" width="1" height="18" fill="#383838"/>
<rect x="71" y="324" width="1" height="18" fill="#383838"/>
<rect x="79" y="324" width="1" height="18" fill="#383838"/>
<rect x="87" y="324" width="1" height="18" fill="#383838"/>
<rect x="95" y="324" width="1" height="18" fill="#383838"/>
<rect x="103" y="324" width="1" height="18" fill="#383838"/>
<rect x="111" y="324" width="1" height="18" fill="#383838"/>
<rect x="119" y="324" width="1" height="18" fill="#383838"/>
<rect x="127" y="324" width="1" height="18" fill="#383838"/>
<rect x="135" y="324" width="1" height="18" fill="#383838"/>
<rect x="143" y="324" width="1" height="18" fill="#383838"/>
<rect x="151" y="324" width="1" height="18" fill="#383838"/>
<rect x="159" y="324" width="1" height="18" fill="#383838"/>
<rect x="167" y="324" width="1" height="18" fill="#383838"/>
<rect x="175" y="324" width="1" height="18" fill="#383838"/>
<rect x="183" y="324" width="1" height="18" fill="#383838"/>
<rect x="191" y="324" width="1" height="18" fill="#383838"/>
<rect x="199" y="324" width="1" height="18" fill="#383838"/>
<rect x="207" y="324" width="1" height="18" fill="#383838"/>
<rect x="0" y="324" width="202" height="1" fill="#383838"/>
<rect x="0" y="325" width="7" height="17" fill="#6e6e6e"/>
<circle cx="3.5" cy="336.5" r="2.6" fill="#000"/>
<rect x="0" y="342" width="202" height="18" fill="#2c2c2c"/>
<rect x="32" y="342" width="8" height="18" fill="#272727"/>
<rect x="72" y="342" width="8" height="18" fill="#272727"/>
<rect x="112" y="342" width="8" height="18" fill="#272727"/>
<rect x="152" y="342" width="8" height="18" fill="#272727"/>
<rect x="192" y="342" width="8" height="18" fill="#272727"/>
<rect x="7" y="342" width="1" height="18" fill="#383838"/>
<rect x="15" y="342" width="1" height="18" fill="#383838"/>
<rect x="23" y="342" width="1" height="18" fill="#383838"/>
<rect x="31" y="342" width="1" height="18" fill="#383838"/>
<rect x="39" y="342" width="1" height="18" fill="#383838"/>
<rect x="47" y="342" width="1" height="18" fill="#383838"/>
<rect x="55" y="342" width="1" height="18" fill="#383838"/>
<rect x="63" y="342" width="1" height="18" fill="#383838"/>
<rect x="71" y="342" width="1" height="18" fill="#383838"/>
<rect x="79" y="342" width="1" height="18" fill="#383838"/>
<rect x="87" y="342" width="1" height="18" fill="#383838"/>
<rect x="95" y="342" width="1" height="18" fill="#383838"/>
<rect x="103" y="342" width="1" height="18" fill="#383838"/>
<rect x="111" y="342" width="1" height="18" fill="#383838"/>
<rect x="119" y="342" width="1" height="18" fill="#383838"/>
<rect x="127" y="342" width="1" height="18" fill="#383838"/>
<rect x="135" y="342" width="1" height="18" fill="#383838"/>
<rect x="143" y="342" width="1" height="18" fill="#383838"/>
<rect x="151" y="342" width="1" height="18" fill="#383838"/>
<rect x="159" y="342" width="1" height="18" fill="#383838"/>
<rect x="167" y="342" width="1" height="18" fill="#383838"/>
<rect x="175" y="342" width="1" height="18" fill="#383838"/>
<rect x="183" y="342" width="1" height="18" fill="#383838"/>
<rect x="191" y="342" width="1" height="18" fill="#383838"/>
<rect x="199" y="342" width="1" height="18" fill="#383838"/>
<rect x="207" y="342" width="1" height="18" fill="#383838"/>
<rect x="0" y="342" width="202" height="1" fill="#383838"/>
<rect x="0" y="343" width="7" height="17" fill="#6e6e6e"/>
<circle cx="3.5" cy="354.5" r="2.6" fill="#000"/>
<rect x="0" y="360" width="202" height="18" fill="#2c2c2c"/>
<rect x="32" y="360" width="8" height="18" fill="#272727"/>
<rect x="72" y="360" width="8" height="18" fill="#272727"/>
<rect x="112" y="360" width="8" height="18" fill="#272727"/>
<rect x="152" y="360" width="8" height="18" fill="#272727"/>
<rect x="192" y="360" width="8" height="18" fill="#272727"/>
<rect x="7" y="360" width="1" height="18" fill="#383838"/>
<rect x="15" y="360" width="1" height="18" fill="#383838"/>
<rect x="23" y="360" width="1" height="18" fill="#383838"/>
<rect x="31" y="360" width="1" height="18" fill="#383838"/>
<rect x="39" y="360" width="1" height="18" fill="#383838"/>
<rect x="47" y="360" width="1" height="18" fill="#383838"/>
<rect x="55" y="360" width="1" height="18" fill="#383838"/>
<rect x="63" y="360" width="1" height="18" fill="#383838"/>
<rect x="71" y="360" width="1" height="18" fill="#383838"/>
<rect x="79" y="360" width="1" height="18" fill="#383838"/>
<rect x="87" y="360" width="1" height="18" fill="#383838"/>
<rect x="95" y="360" width="1" height="18" fill="#383838"/>
<rect x="103" y="360" width="1" height="18" fill="#383838"/>
<rect x="111" y="360" width="1" height="18" fill="#383838"/>
<rect x="119" y="360" width="1" height="18" fill="#383838"/>
<rect x="127" y="360" width="1" height="18" fill="#383838"/>
<rect x="135" y="360" width="1" height="18" fill="#383838"/>
<rect x="143" y="360" width="1" height="18" fill="#383838"/>
<rect x="151" y="360" width="1" height="18" fill="#383838"/>
<rect x="159" y="360" width="1" height="18" fill="#383838"/>
<rect x="167" y="360" width="1" height="18" fill="#383838"/>
<rect x="175" y="360" width="1" height="18" fill="#383838"/>
<rect x="183" y="360" width="1" height="18" fill="#383838"/>
<rect x="191" y="360" width="1" height="18" fill="#383838"/>
<rect x="199" y="360" width="1" height="18" fill="#383838"/>
<rect x="207" y="360" width="1" height="18" fill="#383838"/>
<rect x="0" y="360" width="202" height="1" fill="#383838"/>
<rect x="0" y="361" width="7" height="17" fill="#6e6e6e"/>
<circle cx="3.5" cy="372.5" r="2.3" fill="none" stroke="#000" stroke-width="1"/>
</svg>
<div class="a" style="left:0;top:509px;width:403px;height:198px;background:#262626"></div>
<div class="a" style="left:200px;top:509px;width:1px;height:209px;background:#0a0a0a"></div>
<div class="a" style="left:204px;top:131px;width:1px;height:574px;background:#a01818"></div>
<!-- timeline scrollbars -->
<div class="a" style="left:403px;top:64px;width:12px;height:654px;background:#393939"></div>
<div class="a" style="left:0;top:707px;width:403px;height:11px;background:#353535"></div>
<div class="a" style="left:203px;top:708px;width:24px;height:9px;border-radius:5px;background:#4a4a4a"></div>
<div class="a" style="left:0;top:718px;width:1280px;height:2px;background:#222"></div>

<!-- ============ STAGE ============ -->
<div class="a strip" style="left:417px;top:34px;width:480px;height:20px"></div>
<div class="a panel" style="left:418px;top:35px;width:151px;height:19px;background:#383838"></div>
<div class="a" style="left:425px;top:37px;font-size:12px;color:#9a9a9a">×</div>
<div class="a" style="left:442px;top:38.5px;font-size:11.15px;color:#e0e0e0">08_chad_animatecc.fla*</div>
<div class="a panel" style="left:417px;top:54px;width:478px;height:28px"></div>
<div class="a" style="left:445px;top:58px;width:241px;height:20px;border-radius:10px;background:#2e2e2e"></div>
<svg class="a" style="left:422px;top:62px" width="16" height="14" viewBox="0 0 16 14"><path d="M1 7l6-5v3h7v4H7v3z" fill="#bdbdbd"/></svg>
<svg class="a" style="left:450px;top:60px" width="20" height="18" viewBox="0 0 20 18"><rect x="2" y="7" width="14" height="9" fill="#c8c8c8"/><path d="M2 6l13-4 1 3-13 4z" fill="#c8c8c8"/><path d="M5 4.5l2 2.5M8.5 3.5l2 2.5M12 2.5l2 2.5" stroke="#2e2e2e" stroke-width="1.2"/></svg>
<div class="a" style="left:476.5px;top:63px;font-size:11px;color:#e0e0e0">Scene 1</div>
<svg class="a" style="left:527px;top:60px" width="18" height="18" viewBox="0 0 18 18"><path d="M2 12L10 2v9" stroke="#c8c8c8" stroke-width="1.3" fill="none"/><rect x="9" y="8" width="7" height="7" fill="#c8c8c8"/><circle cx="7" cy="13" r="3" fill="#2e2e2e" stroke="#c8c8c8" stroke-width="1.3"/></svg>
<div class="a" style="left:555px;top:62.5px;font-size:11.6px;color:#e0e0e0">02_chad_reduced.psd</div>
<svg class="a" style="left:692px;top:58px" width="130" height="22" viewBox="0 0 130 22">
 <rect x="2" y="9" width="13" height="8" fill="#c8c8c8"/><path d="M2 8l12-4 1 3-12 4z" fill="#c8c8c8"/><path d="M5 6.5l2 2M8 5.5l2 2M11 4.5l2 2" stroke="#3a3a3a" stroke-width="1.1"/><path d="M14 17h5l-2.5 2.5z" fill="#c8c8c8"/>
 <path d="M37 14L45 4v9" stroke="#c8c8c8" stroke-width="1.3" fill="none"/><rect x="44" y="10" width="7" height="6" fill="#c8c8c8"/><circle cx="42" cy="15" r="3" fill="#3a3a3a" stroke="#c8c8c8" stroke-width="1.3"/><path d="M50 17h5l-2.5 2.5z" fill="#c8c8c8"/>
 <path d="M71 4v14M64 11h14" stroke="#c8c8c8" stroke-width="1.2"/><rect x="67" y="7" width="8" height="8" fill="none" stroke="#c8c8c8" stroke-width="1.2"/>
 <rect x="90" y="5" width="13" height="13" fill="#5a5a5a"/><rect x="92.5" y="7.5" width="8" height="8" fill="#3a3a3a" stroke="#c8c8c8" stroke-width="1.3"/>
</svg>
<div class="a" style="left:807px;top:59px;width:79px;height:19px;border:1px solid #4a4a4a;border-radius:3px;background:#353535"></div>
<div class="a" style="left:868px;top:59px;width:1px;height:19px;background:#4a4a4a"></div>
<div class="a" style="left:815px;top:62px;font-size:12px;color:#e0e0e0">51%</div>
<svg class="a" style="left:872px;top:65px" width="10" height="7" viewBox="0 0 10 7"><path d="M1 1l4 4 4-4" stroke="#cfcfcf" stroke-width="1.3" fill="none"/></svg>
<div class="a" style="left:417px;top:82px;width:466px;height:625px;background:#1b1b1b"></div>
<div class="a" style="left:418px;top:96px;width:465px;height:552px;background:#fff;overflow:hidden">
<svg width="465" height="552" viewBox="418 96 465 552" style="position:absolute;left:0;top:0"><g stroke-linejoin="round" stroke-linecap="round"><path d="M690 258 Q700.0 251.4 712 250 Q721.8 240.2 735 236 Q741.6 248.2 742 262 Q745.4 276.0 742 290 Q742.6 301.5 738 312 Q734.6 313.3 731 313 Q729.3 321.2 726 329 Q722.5 324.8 720 320 Q717.2 317.0 716 313 Q710.2 310.7 706 306 Q697.3 304.9 690 300 Q685.0 301.2 680 300 Q676.1 292.5 676 284 Q679.9 269.3 690 258Z" fill="#d65a25" stroke="#151515" stroke-width="1.3"/>
<path d="M700 262 C708 274 714 290 716 306 M718 262 C724 276 728 290 727 303 M692 280 C698 290 704 298 708 306" fill="none" stroke="#151515" stroke-width="0.9"/>
<path d="M728 240 Q732.2 235.7 738 237 Q744.1 236.2 748 241 Q753.9 241.0 757 246 Q757.1 236.1 761 227 Q765.7 237.5 766 249 Q771.6 248.5 775 253 Q782.0 253.7 785 260 Q793.6 258.8 802 261 Q799.2 265.2 795 268 Q801.1 265.9 806 270 Q812.5 272.3 814 279 Q819.6 284.4 818 292 Q824.4 295.4 829 301 Q822.5 302.3 816 301 Q810.6 300.7 808 296 Q808.5 301.6 804 305 Q802.7 311.0 797 313 Q799.4 319.6 795 325 Q790.1 331.7 783 336 Q779.4 333.6 777 330 Q772.9 325.1 775 319 Q769.4 319.5 766 315 Q763.9 320.1 760 324 Q755.7 318.1 754 311 Q754.5 316.6 750 320 Q746.2 327.0 740 332 Q738.4 329.2 738 326 Q739.0 320.8 744 319 Q737.2 316.2 736 309 Q729.5 306.7 728 300 Q718.6 285.6 726 270 Q718.6 254.4 728 240Z" fill="#f26a2b" stroke="#151515" stroke-width="1.3"/>
<clipPath id="pc"><path d="M728 240 Q732.2 235.7 738 237 Q744.1 236.2 748 241 Q753.9 241.0 757 246 Q757.1 236.1 761 227 Q765.7 237.5 766 249 Q771.6 248.5 775 253 Q782.0 253.7 785 260 Q793.6 258.8 802 261 Q799.2 265.2 795 268 Q801.1 265.9 806 270 Q812.5 272.3 814 279 Q819.6 284.4 818 292 Q824.4 295.4 829 301 Q822.5 302.3 816 301 Q810.6 300.7 808 296 Q808.5 301.6 804 305 Q802.7 311.0 797 313 Q799.4 319.6 795 325 Q790.1 331.7 783 336 Q779.4 333.6 777 330 Q772.9 325.1 775 319 Q769.4 319.5 766 315 Q763.9 320.1 760 324 Q755.7 318.1 754 311 Q754.5 316.6 750 320 Q746.2 327.0 740 332 Q738.4 329.2 738 326 Q739.0 320.8 744 319 Q737.2 316.2 736 309 Q729.5 306.7 728 300 Q718.6 285.6 726 270 Q718.6 254.4 728 240Z"/></clipPath>
<path clip-path="url(#pc)" d="M726 262 Q734 270 740 285 Q752 290 762 296 Q775 292 790 298 Q800 296 808 300 L830 340 L700 340 Z" fill="#df5f27"/>
<path clip-path="url(#pc)" d="M726 240 Q732 250 730 262 Q728 280 740 296 L720 320 L715 240Z" fill="#d9582a"/>
<path d="M728 240 Q732.2 235.7 738 237 Q744.1 236.2 748 241 Q753.9 241.0 757 246 Q757.1 236.1 761 227 Q765.7 237.5 766 249 Q771.6 248.5 775 253 Q782.0 253.7 785 260 Q793.6 258.8 802 261 Q799.2 265.2 795 268 Q801.1 265.9 806 270 Q812.5 272.3 814 279 Q819.6 284.4 818 292 Q824.4 295.4 829 301 Q822.5 302.3 816 301 Q810.6 300.7 808 296 Q808.5 301.6 804 305 Q802.7 311.0 797 313 Q799.4 319.6 795 325 Q790.1 331.7 783 336 Q779.4 333.6 777 330 Q772.9 325.1 775 319 Q769.4 319.5 766 315 Q763.9 320.1 760 324 Q755.7 318.1 754 311 Q754.5 316.6 750 320 Q746.2 327.0 740 332 Q738.4 329.2 738 326 Q739.0 320.8 744 319 Q737.2 316.2 736 309 Q729.5 306.7 728 300 Q718.6 285.6 726 270 Q718.6 254.4 728 240Z" fill="none" stroke="#151515" stroke-width="1.3"/>
<path d="M745 262 C752 266 756 274 756 284 M766 276 C772 282 774 290 772 300 M784 282 C790 288 794 294 794 302 M750 298 C756 302 758 308 758 314 M772 304 C778 308 780 314 780 320 M740 280 C744 286 746 292 746 300" fill="none" stroke="#151515" stroke-width="0.9"/>
<path d="M734 234 Q737.8 224.7 746 219 Q745.5 228.4 740 236 Q736.6 236.2 734 234Z" fill="#e2602a" stroke="#151515" stroke-width="1.1"/>
<path d="M668.0 450.0 L694.0 448.0 L700.0 500.0 L703.0 540.0 L704.0 588.0 L681.0 588.0 L681.0 540.0 L681.0 490.0 L680.0 469.0Z" fill="#2b2e2f" stroke="#151515" stroke-width="1.3"/>
<path d="M694.0 520.0 L702.0 540.0 L704.0 588.0 L697.0 588.0 L696.0 540.0Z" fill="#202223" stroke="none"/>
<path d="M675.0 587.0 L706.0 587.0 L707.0 602.2 L674.0 602.2Z" fill="#7a7a7a" stroke="#151515" stroke-width="1.3"/>
<path d="M692.0 587.0 L706.0 587.0 L707.0 602.0 L694.0 602.0Z" fill="#666" stroke="none"/>
<path d="M685.0 602.0 L698.0 602.0 L698.0 609.0 L685.0 609.0Z" fill="#e8b498" stroke="none"/>
<path d="M682.5 608.7 C684.7 607.9 699.8 607.1 702.0 608.0 C704.2 608.9 701.4 614.2 701.0 616.0 C700.6 617.8 700.6 622.0 699.0 622.8 C697.4 623.6 689.8 623.7 688.0 622.8 C686.2 621.9 684.7 616.7 684.0 615.0 C683.3 613.3 680.3 609.5 682.5 608.7Z" fill="#eeeeee" stroke="#151515" stroke-width="1.1"/>
<path d="M628.0 442.0 L694.0 446.0 L694.0 469.0 L680.0 469.0 L657.0 470.0 L656.0 582.0 L632.0 582.0 L633.0 520.0 L634.0 470.0Z" fill="#2b2e2f" stroke="#151515" stroke-width="1.3"/>
<path d="M648.0 470.0 L657.0 472.0 L656.0 582.0 L650.0 582.0Z" fill="#202223" stroke="none"/>
<path d="M648 446 C650 456 652 462 657 470 M662 446 C662 456 664 464 667 470" fill="none" stroke="#151515" stroke-width="0.9"/>
<path d="M627.2 582.0 L660.0 582.0 L660.5 597.0 L627.0 597.0Z" fill="#7a7a7a" stroke="#151515" stroke-width="1.3"/>
<path d="M646.0 582.0 L660.0 582.0 L660.5 597.0 L647.0 597.0Z" fill="#666" stroke="none"/>
<path d="M638.0 597.0 L651.0 597.0 L651.0 604.0 L638.0 604.0Z" fill="#e8b498" stroke="none"/>
<path d="M635.0 603.0 C637.2 601.9 653.0 601.6 655.3 602.7 C657.6 603.8 654.4 610.3 654.0 612.0 C653.6 613.7 653.6 616.4 652.0 617.0 C650.4 617.6 642.8 617.6 641.0 617.0 C639.2 616.4 637.7 613.7 637.0 612.0 C636.3 610.3 632.8 604.1 635.0 603.0Z" fill="#eeeeee" stroke="#151515" stroke-width="1.1"/>
<path d="M605.2 628.4 Q607 625.5 613 623.5 L623.4 617.2 L633.7 610.2 L640.3 614.4 L652.5 612.5 Q659.5 618 661.9 627.5 L661.9 631.2 L605.2 631.2Z" fill="#2c2c2c" stroke="#151515" stroke-width="1.3"/>
<path d="M623.0 617.5 L633.7 610.5 L642.0 619.0 L632.0 625.0Z" fill="#3d3d3d" stroke="#151515" stroke-width="1.0"/>
<path d="M630.0 614.0 L637.0 610.0 L643.0 615.5 L637.0 620.0Z" fill="#3d3d3d" stroke="#151515" stroke-width="1.0"/>
<path d="M606.0 628.5 L661.5 628.5 L661.5 631.0 L606.0 631.0Z" fill="#1a1a1a" stroke="none"/>
<path d="M653.4 634 Q655.5 631 661 629 L670.3 621 L681.5 616.2 L688 621 L702 619.5 Q707.5 625 709.7 634 L709.7 636.9 L653.4 636.9Z" fill="#2c2c2c" stroke="#151515" stroke-width="1.3"/>
<path d="M670.0 621.5 L681.5 616.5 L690.0 625.0 L679.0 630.5Z" fill="#3d3d3d" stroke="#151515" stroke-width="1.0"/>
<path d="M678.0 619.0 L685.0 615.5 L691.0 621.0 L685.0 625.0Z" fill="#3d3d3d" stroke="#151515" stroke-width="1.0"/>
<path d="M654.0 634.2 L709.3 634.2 L709.3 636.7 L654.0 636.7Z" fill="#1a1a1a" stroke="none"/>
<path d="M657.0 469.0 C658.5 467.4 664.4 466.6 666.0 469.0 C667.6 471.4 667.9 481.2 668.0 485.0 C668.1 488.8 667.9 492.2 667.0 494.0 C666.1 495.8 663.4 497.3 662.0 497.0 C660.6 496.7 658.9 494.6 658.0 492.0 C657.1 489.4 656.1 483.4 656.0 480.0 C655.9 476.6 655.5 470.6 657.0 469.0Z" fill="#f0bda2" stroke="#151515" stroke-width="1.1"/>
<path d="M659 484 C662 482 664 483 666 486 M660 490 C662 488 664 489 665 491" fill="none" stroke="#151515" stroke-width="0.8"/>
<path d="M651.0 300.0 C648.4 301.1 642.0 307.4 640.0 311.0 C638.0 314.6 635.4 324.1 634.0 330.0 C632.6 335.9 629.3 352.8 628.0 360.0 C626.7 367.2 624.1 382.8 623.0 390.0 C621.9 397.2 619.6 414.2 619.0 420.0 C618.4 425.8 615.4 435.4 618.0 438.0 C620.6 440.6 632.0 441.0 641.0 442.0 C650.0 443.0 686.4 444.1 693.0 446.0 C699.6 447.9 692.6 456.6 696.0 458.0 C699.4 459.4 718.1 462.6 721.0 458.0 C723.9 453.4 720.2 429.4 720.0 420.0 C719.8 410.6 719.2 388.6 719.0 380.0 C718.8 371.4 718.2 355.2 718.0 348.0 C717.8 340.8 717.8 324.7 717.0 320.0 C716.2 315.3 713.4 311.5 711.0 309.0 C708.6 306.5 700.4 300.8 697.0 299.0 C693.6 297.2 687.2 293.6 683.0 294.0 C678.8 294.4 665.8 301.3 662.0 302.0 C658.2 302.7 653.6 298.9 651.0 300.0Z" fill="#d83d25" stroke="#151515" stroke-width="1.3"/>
<path d="M703.0 318.0 L713.0 318.0 L718.0 348.0 L720.0 420.0 L721.0 458.0 L707.0 458.0 L704.0 420.0Z" fill="#b9331f" stroke="none"/>
<path d="M620.0 415.0 L641.0 420.0 L641.0 442.0 L618.0 438.0Z" fill="#b9331f" stroke="none"/>
<path d="M658.0 310.0 C659.2 309.7 664.5 314.7 666.0 315.0 C667.5 315.3 672.7 309.4 673.0 313.0 C673.3 316.6 669.9 343.6 669.0 351.0 C668.1 358.4 664.5 379.4 663.7 387.0 C662.9 394.6 663.0 423.0 661.0 427.0 C659.0 431.0 645.5 431.9 643.9 427.0 C642.3 422.1 644.3 386.5 644.8 378.0 C645.3 369.5 648.4 348.0 649.3 342.0 C650.2 336.0 652.9 321.2 653.8 318.0 C654.7 314.8 656.8 310.3 658.0 310.0Z" fill="#8fc3de" stroke="#151515" stroke-width="1.2"/>
<path d="M663.7 326.7 L653.8 348.4 L662.8 348.0Z" fill="#f3c93c" stroke="#151515" stroke-width="1.0"/>
<path d="M647.5 362 C650 352 664 350 668.5 358 L668 363 C662 357 652 357 647.5 366Z" fill="#f3c93c" stroke="#151515" stroke-width="1.0"/>
<path d="M645.5 382 C650 392 660 393 665 386 L664.5 392 C660 398 650 398 645 391Z" fill="#f3c93c" stroke="#151515" stroke-width="1.0"/>
<path d="M648.4 398.0 L655.6 398.0 L651.0 418.0Z" fill="#f3c93c" stroke="#151515" stroke-width="0.8"/>
<path d="M659.0 398.0 L662.0 398.0 L661.0 410.0Z" fill="#f3c93c" stroke="#151515" stroke-width="0.6"/>
<path d="M642.0 427.0 C643.1 425.6 649.9 426.0 652.0 426.0 C654.1 426.0 661.8 425.6 663.0 427.0 C664.2 428.4 665.1 438.5 664.0 440.0 C662.9 441.5 654.3 442.0 652.0 442.0 C649.7 442.0 642.0 441.5 641.0 440.0 C640.0 438.5 640.9 428.4 642.0 427.0Z" fill="#c9b04a" stroke="#151515" stroke-width="1.0"/>
<path d="M646 432 C648 430 650 430 651 432 M654 432 C656 430 658 430 659 432 M650 437 C652 438 654 438 655 437" fill="none" stroke="#151515" stroke-width="0.8"/>
<path d="M651.0 300.0 C652.7 299.9 656.7 308.2 657.0 310.0 C657.3 311.8 654.6 314.8 653.8 318.0 C653.0 321.2 650.2 336.0 649.3 342.0 C648.4 348.0 645.3 369.5 644.8 378.0 C644.3 386.5 644.2 420.9 643.9 427.0 C643.6 433.1 644.4 439.0 642.0 439.5 C639.6 440.0 621.5 436.2 619.5 432.3 C617.5 428.4 621.1 407.2 622.0 400.0 C622.9 392.8 626.8 367.0 628.0 360.0 C629.2 353.0 632.8 334.9 634.0 330.0 C635.2 325.1 638.3 314.0 640.0 311.0 C641.7 308.0 649.3 300.1 651.0 300.0Z" fill="#d83d25" stroke="#151515" stroke-width="1.3"/>
<path d="M648 308 C646 318 646 324 648 330" fill="none" stroke="#151515" stroke-width="1.0"/>
<path d="M673.0 313.0 C674.1 309.3 681.6 297.3 684.0 296.0 C686.4 294.7 695.2 297.8 697.0 300.0 C698.8 302.2 701.6 312.0 702.0 318.0 C702.4 324.0 701.3 351.8 701.0 360.0 C700.7 368.2 699.5 393.0 699.0 400.0 C698.5 407.0 696.5 425.4 696.0 430.0 C695.5 434.6 697.2 445.1 694.0 446.0 C690.8 446.9 667.0 441.4 663.7 439.5 C660.4 437.6 661.0 432.2 661.0 427.0 C661.0 421.8 662.9 394.6 663.7 387.0 C664.5 379.4 668.1 356.4 669.0 351.0 C669.9 345.6 672.4 336.8 672.8 333.0 C673.2 329.2 671.9 316.7 673.0 313.0Z" fill="#d83d25" stroke="#151515" stroke-width="1.3"/>
<path d="M672.0 312.0 L699.0 306.0 L701.0 316.0 L683.0 333.0Z" fill="#cf3a22" stroke="#151515" stroke-width="1.2"/>
<path d="M680 340 C678 380 678 410 679 442" fill="none" stroke="#151515" stroke-width="1.0"/>
<path d="M662 438 L694 441 M620 432 L641 436" fill="none" stroke="#151515" stroke-width="1.0"/>
<ellipse cx="676.4" cy="341" rx="1.9" ry="2.6" fill="#151515"/>
<ellipse cx="672.8" cy="361" rx="1.9" ry="2.6" fill="#151515"/>
<ellipse cx="669" cy="381.8" rx="1.9" ry="2.6" fill="#151515"/>
<ellipse cx="668.2" cy="403.4" rx="1.9" ry="2.6" fill="#151515"/>
<ellipse cx="668.2" cy="425" rx="1.9" ry="2.6" fill="#151515"/>
<path d="M716 322 C707 326 705 340 716 344Z" fill="#8e9aa3" stroke="#151515" stroke-width="1.0"/>
<path d="M707 349 L719 349 L719 354 L707 354Z" fill="#8e9aa3" stroke="#151515" stroke-width="1.0"/>
<path d="M705 360 L719 360 L719 365 L705 365Z" fill="#8e9aa3" stroke="#151515" stroke-width="1.0"/>
<path d="M695 328 L701 320 L701 342Z" fill="#8e9aa3" stroke="#151515" stroke-width="1.0"/>
<path d="M638 325 L642 330 L637 335 Z" fill="#8e9aa3" stroke="#151515" stroke-width="1.0"/>
<path d="M633 349 L636 355 L631 358Z" fill="#8e9aa3" stroke="#151515" stroke-width="1.0"/>
<path d="M631 360 L633 366 L629 368Z" fill="#8e9aa3" stroke="#151515" stroke-width="1.0"/>
<path d="M625 396 L639 398 L638.5 403 L624 401Z" fill="#8e9aa3" stroke="#151515" stroke-width="1.0"/>
<path d="M623 405 L634 406.5 L634 411 L622.5 409.5Z" fill="#8e9aa3" stroke="#151515" stroke-width="1.0"/>
<path d="M719 410 L719 430 L708 421Z" fill="#8e9aa3" stroke="#151515" stroke-width="1.0"/>
<path d="M719 434 L719 447 L710 441Z" fill="#8e9aa3" stroke="#151515" stroke-width="1.0"/>
<rect x="686.5" y="466.5" width="33.5" height="65.5" fill="none" stroke="#2a8cd8" stroke-width="1"/>
<path d="M691.7 458.3 L723.3 461.7 L724.4 476.0 L692.2 472.8Z" fill="#d83d25" stroke="#151515" stroke-width="1.3"/>
<path d="M710.0 460.0 L723.0 461.7 L724.0 475.5 L711.0 474.5Z" fill="#b9331f" stroke="none"/>
<path d="M699.0 474.0 L717.0 476.0 L718.5 490.0 L718.3 502.0 L715.0 514.0 L712.0 513.0 L710.0 524.0 L708.0 522.0 L706.5 530.0 L703.0 532.0 L702.0 522.0 L700.0 525.5 L697.0 525.5 L695.5 506.0 L694.5 499.5 L687.0 504.5 L691.0 487.0Z" fill="#f0bda2" stroke="#151515" stroke-width="1.1"/>
<path d="M699.0 474.0 L717.0 476.0 L717.0 482.0 L705.0 480.0Z" fill="#d9a184" stroke="none"/>
<path d="M701 508 L702 521 M706 508 L707 521 M711 506 L712 513" fill="none" stroke="#151515" stroke-width="0.8"/>
<circle cx="700.6" cy="499.4" r="3.3" fill="#f7f7f7" stroke="#151515" stroke-width="1.1"/>
<circle cx="700.6" cy="499.4" r="1.4" fill="#f0bda2"/>
<path d="M662.0 284.0 L683.0 282.0 L683.0 305.0 L672.0 314.0 L662.0 310.0Z" fill="#f2bea6" stroke="#151515" stroke-width="1.3"/>
<path d="M662.0 287.0 L683.0 284.0 L683.0 296.0 L662.0 298.0Z" fill="#d89f84" stroke="none"/>
<path d="M621.0 168.0 C626.3 164.8 666.1 165.8 672.0 168.0 C677.9 170.2 678.8 182.8 680.0 190.0 C681.2 197.2 682.7 232.8 684.0 240.0 C685.3 247.2 692.2 258.8 693.0 262.0 C693.8 265.2 693.3 269.8 692.0 272.0 C690.7 274.2 683.2 282.3 680.0 284.0 C676.8 285.7 664.0 288.4 660.0 289.0 C656.0 289.6 643.2 290.5 640.0 290.0 C636.8 289.5 629.7 285.7 628.0 284.0 C626.3 282.3 623.4 275.2 623.0 273.0 C622.6 270.8 624.5 263.8 624.0 262.0 C623.5 260.2 619.3 256.0 618.0 255.0 C616.7 254.0 611.9 252.8 611.0 252.0 C610.1 251.2 608.7 247.9 609.0 247.0 C609.3 246.1 613.0 243.7 614.0 243.0 C615.0 242.3 618.5 244.3 619.0 240.0 C619.5 235.7 618.8 207.2 619.0 200.0 C619.2 192.8 615.7 171.2 621.0 168.0Z" fill="#f2bea6" stroke="#151515" stroke-width="1.3"/>
<path d="M655.0 180.0 C656.2 176.5 668.5 168.8 672.0 176.0 C675.5 183.2 681.5 229.7 684.0 240.0 C686.5 250.3 692.0 258.2 693.0 262.0 C694.0 265.8 693.6 269.4 692.0 272.0 C690.4 274.6 683.8 282.0 680.0 284.0 C676.2 286.0 664.2 288.4 660.0 289.0 C655.8 289.6 645.0 289.8 645.0 289.0 C645.0 288.2 657.5 285.2 660.0 282.0 C662.5 278.8 665.3 267.6 666.0 262.0 C666.7 256.4 666.5 241.8 666.0 235.0 C665.5 228.2 663.3 211.6 662.0 205.0 C660.7 198.4 653.8 183.5 655.0 180.0Z" fill="#d89f84" stroke="none"/>
<path d="M620.0 242.0 C618.2 241.1 613.6 243.1 612.0 244.0 C610.4 244.9 609.0 246.8 609.0 248.0 C609.0 249.2 610.2 251.1 612.0 252.0 C613.8 252.9 619.2 254.3 621.0 254.0 C622.8 253.7 624.1 251.8 624.0 250.0 C623.9 248.2 621.8 242.9 620.0 242.0Z" fill="#f7cdb4" stroke="#151515" stroke-width="1.1"/>
<ellipse cx="632" cy="231" rx="8" ry="15.5" fill="#d89f84" stroke="#151515" stroke-width="1.1"/>
<path d="M624.5 229 C629 227 636 227 640 230 L640 240 C634 243 628 243 625 240Z" fill="#eef3f6" stroke="#151515" stroke-width="1.0"/>
<circle cx="629.5" cy="233.5" r="2.3" fill="#1e1e1e"/>
<path d="M623.5 228.5 C628 225.5 636 225.5 641 229.5" fill="none" stroke="#151515" stroke-width="1.8"/>
<path d="M623 205 C627 199 633 197 637 198 C643 202 648 208 652 215 C644 210 636 207 623 206Z" fill="#b5552b" stroke="#151515" stroke-width="1.0"/>
<path d="M622 266 C630 267 640 265 648 259" fill="none" stroke="#151515" stroke-width="1.2"/>
<path d="M638 249 L642 247.5 M640 251 L643.5 250" fill="none" stroke="#151515" stroke-width="0.8"/>
<path d="M609 172 Q604.7 164.2 611.0 158.0 Q610.8 149.5 619.0 147.0 Q620.4 142.0 625.6 142.0 Q622.5 136.5 627.0 132.0 Q631.0 123.8 640.0 125.5 Q645.2 118.8 653.0 122.0 Q655.9 112.9 665.5 113.3 Q679.8 105.7 691.0 117.5 Q700.6 113.0 707.5 121.0 Q717.8 122.2 719.4 132.5 Q733.4 133.7 736.0 147.5 Q747.8 154.3 744.4 167.5 Q752.4 176.8 745.5 187.0 Q750.7 199.6 740.0 208.0 Q742.6 218.7 733.0 224.0 Q728 238 714 250 L703 244 L684 244 L674.5 195 L671.7 181 L657 179 Q652 171 643 170 Q639 168 636 167 L628 168 L622.4 169.4 L620 190 L619 230 L616 233 L614 222 L615 210 L612 196 L612.5 183Z" fill="#cc5321" stroke="#151515" stroke-width="1.3"/>
<path d="M609 172 Q604.7 164.2 611.0 158.0 Q610.8 149.5 619.0 147.0 Q620.4 142.0 625.6 142.0 Q622.5 136.5 627.0 132.0 Q631.0 123.8 640.0 125.5 Q645.2 118.8 653.0 122.0 Q655.9 112.9 665.5 113.3 Q680 108 702 116 Q703 124 701 129 Q694 126 687 132 Q680 140 684 150 Q680 150 677 155 Q668 156 670 163 Q664 172 668 181 L657 179 L643 170 L628 168 L621 175Z" fill="#f26a2b" stroke="none"/>
<clipPath id="hc"><path d="M609 172 Q604.7 164.2 611.0 158.0 Q610.8 149.5 619.0 147.0 Q620.4 142.0 625.6 142.0 Q622.5 136.5 627.0 132.0 Q631.0 123.8 640.0 125.5 Q645.2 118.8 653.0 122.0 Q655.9 112.9 665.5 113.3 Q679.8 105.7 691.0 117.5 Q700.6 113.0 707.5 121.0 Q717.8 122.2 719.4 132.5 Q733.4 133.7 736.0 147.5 Q747.8 154.3 744.4 167.5 Q752.4 176.8 745.5 187.0 Q750.7 199.6 740.0 208.0 Q742.6 218.7 733.0 224.0 Q728 238 714 250 L703 244 L684 244 L674.5 195 L671.7 181 L657 179 Q652 171 643 170 Q639 168 636 167 L628 168 L622.4 169.4 L620 190 L619 230 L616 233 L614 222 L615 210 L612 196 L612.5 183Z"/></clipPath>
<path clip-path="url(#hc)" d="M719.4 132.5 Q740 126 752 146 L752 210 L740 212 L736 206 Q740 196 739 186 Q743 176 738 168 Q741 156 735 148 Q729 139 719 137Z" fill="#b8481c"/>
<path d="M609 172 Q604.7 164.2 611.0 158.0 Q610.8 149.5 619.0 147.0 Q620.4 142.0 625.6 142.0 Q622.5 136.5 627.0 132.0 Q631.0 123.8 640.0 125.5 Q645.2 118.8 653.0 122.0 Q655.9 112.9 665.5 113.3 Q679.8 105.7 691.0 117.5 Q700.6 113.0 707.5 121.0 Q717.8 122.2 719.4 132.5 Q733.4 133.7 736.0 147.5 Q747.8 154.3 744.4 167.5 Q752.4 176.8 745.5 187.0 Q750.7 199.6 740.0 208.0 Q742.6 218.7 733.0 224.0 Q728 238 714 250 L703 244 L684 244 L674.5 195 L671.7 181 L657 179 Q652 171 643 170 Q639 168 636 167 L628 168 L622.4 169.4 L620 190 L619 230 L616 233 L614 222 L615 210 L612 196 L612.5 183Z" fill="none" stroke="#151515" stroke-width="1.3"/>
<path d="M653 122 l1 4 M665.5 113.3 l0.5 4 M691 117.5 l-0.5 4.5 M707.5 121 l-1 4 M719.4 132.5 l-2 4 M736 147.5 l-3 3 M744.4 167.5 l-3.5 1 M745.5 187 l-3 0 M640 125.5 l1.5 3.5 M625.6 142 l2 3 " fill="none" stroke="#151515" stroke-width="1.1"/>
<path d="M687 133 C692 128 698 128 701 132 M701 130 C708 126 714 130 717 137 M717 137 C722 138 725 142 725 147 M725 147 C730 148 732 152 732 156" fill="none" stroke="#151515" stroke-width="1.0"/>
<path d="M660 158 C664 162 670 162 673 160 M673 160 C678 166 684 166 686 165" fill="none" stroke="#151515" stroke-width="1.0"/>
<path d="M703 165 C710 170 714 178 716 186 M716 186 C718 190 722 196 722 202" fill="none" stroke="#151515" stroke-width="1.0"/>
<path d="M688 188 C698 196 710 212 716 226 M690 205 C698 212 704 220 708 228 M698 180 C706 188 712 198 716 205" fill="none" stroke="#151515" stroke-width="0.9"/>
<path d="M626.0 142.0 C626.6 140.8 631.4 139.3 633.0 140.0 C634.6 140.7 638.2 144.9 639.0 148.0 C639.8 151.1 639.7 161.8 640.0 166.0 C640.3 170.2 641.7 181.1 641.2 183.0 C640.7 184.9 637.1 182.2 636.0 182.0 C634.9 181.8 633.1 180.5 632.0 181.0 C630.9 181.5 627.5 184.1 627.0 186.0 C626.5 187.9 628.3 196.6 628.0 197.0 C627.7 197.4 624.4 191.3 624.5 189.0 C624.6 186.7 627.9 180.0 629.0 178.0 C630.1 176.0 633.8 174.2 634.0 172.0 C634.2 169.8 631.7 162.6 631.0 160.0 C630.3 157.4 628.6 152.2 628.0 150.0 C627.4 147.8 625.4 143.2 626.0 142.0Z" fill="#f26a2b" stroke="#151515" stroke-width="1.1"/>
<path d="M611.0 158.0 C612.3 155.6 617.4 151.8 619.0 152.0 C620.6 152.2 623.9 157.2 624.0 160.0 C624.1 162.8 620.6 170.8 620.0 175.0 C619.4 179.2 619.2 190.2 619.0 195.0 C618.8 199.8 618.4 210.4 618.0 215.0 C617.6 219.6 616.5 231.8 616.0 233.0 C615.5 234.2 614.2 227.8 614.0 225.0 C613.8 222.2 614.2 213.6 614.0 210.0 C613.8 206.4 612.2 198.2 612.0 195.0 C611.8 191.8 612.5 185.8 612.0 183.0 C611.5 180.2 608.1 175.0 608.0 172.0 C607.9 169.0 609.7 160.4 611.0 158.0Z" fill="#e8652a" stroke="#151515" stroke-width="1.1"/>
<path d="M671.7 181 C674 190 679 215 681 243" fill="none" stroke="#151515" stroke-width="1.2"/>
<path d="M681.0 243.0 C682.5 241.3 688.0 234.4 691.0 232.0 C694.0 229.6 698.3 227.3 701.0 227.0 C703.7 226.7 707.5 228.5 709.0 230.0 C710.5 231.5 710.9 234.4 711.0 237.0 C711.1 239.6 710.8 244.3 710.0 247.0 C709.2 249.7 708.1 253.1 706.0 255.0 C703.9 256.9 698.0 258.9 696.0 260.0 C694.0 261.1 693.5 261.7 693.0 262.0 L688 262 L680 250Z" fill="#d89f84" stroke="none"/>
<path d="M681.0 243.0 C682.5 241.3 688.0 234.4 691.0 232.0 C694.0 229.6 698.3 227.3 701.0 227.0 C703.7 226.7 707.5 228.5 709.0 230.0 C710.5 231.5 710.9 234.4 711.0 237.0 C711.1 239.6 710.8 244.3 710.0 247.0 C709.2 249.7 708.1 253.1 706.0 255.0 C703.9 256.9 698.0 258.9 696.0 260.0 C694.0 261.1 693.5 261.7 693.0 262.0" fill="none" stroke="#151515" stroke-width="1.2"/>
<path d="M689.0 244.0 C689.3 242.5 692.4 239.2 694.0 238.0 C695.6 236.8 698.5 236.0 700.0 236.0 C701.5 236.0 703.9 237.1 704.0 238.0 C704.1 238.9 702.2 241.1 701.0 242.0 C699.8 242.9 697.4 243.1 696.0 244.0 C694.6 244.9 693.0 248.0 692.0 248.0 C691.0 248.0 688.7 245.5 689.0 244.0Z" fill="#c58d73" stroke="none"/>
<path d="M689 243 C694 236 702 234 706 238 M696 240 C699 238 702 239 703 241" fill="none" stroke="#151515" stroke-width="1.0"/>
<ellipse cx="690" cy="121" rx="3" ry="1.5" fill="#f78a55"/>
<ellipse cx="660" cy="125" rx="3" ry="1.5" fill="#f78a55"/>
<ellipse cx="640" cy="136" rx="2.5" ry="1.5" fill="#f78a55"/>
<ellipse cx="666" cy="167" rx="2.5" ry="1.3" fill="#f78a55"/></g></svg>
</div>
<div class="a" style="left:883px;top:82px;width:12px;height:625px;background:#393939"></div>
<div class="a" style="left:884px;top:259px;width:10px;height:292px;border-radius:5px;background:#474747"></div>
<svg class="a" style="left:883px;top:84px" width="12" height="8" viewBox="0 0 12 8"><path d="M2 6l4-4 4 4" stroke="#8a8a8a" stroke-width="1" fill="none"/></svg>
<svg class="a" style="left:883px;top:698px" width="12" height="8" viewBox="0 0 12 8"><path d="M2 2l4 4 4-4" stroke="#8a8a8a" stroke-width="1" fill="none"/></svg>
<div class="a" style="left:417px;top:707px;width:478px;height:11px;background:#393939"></div>
<div class="a" style="left:576px;top:708px;width:120px;height:10px;border-radius:5px;background:#4a4a4a"></div>
<svg class="a" style="left:420px;top:708px" width="8" height="10" viewBox="0 0 8 10"><path d="M6 1L2 5l4 4" stroke="#8a8a8a" stroke-width="1" fill="none"/></svg>
<svg class="a" style="left:874px;top:708px" width="8" height="10" viewBox="0 0 8 10"><path d="M2 1l4 4-4 4" stroke="#8a8a8a" stroke-width="1" fill="none"/></svg>

<!-- ============ RIGHT icon strip ============ -->
<div class="a strip" style="left:897px;top:34px;width:383px;height:12px"></div>
<svg class="a" style="left:921px;top:36px" width="10" height="8" viewBox="0 0 10 8"><path d="M4 1.5L1.5 4 4 6.5M8 1.5L5.5 4 8 6.5" stroke="#a8a8a8" stroke-width="1.2" fill="none"/></svg>
<svg class="a" style="left:1224px;top:36px" width="10" height="8" viewBox="0 0 10 8"><path d="M1.5 1.5L4 4 1.5 6.5M5.5 1.5L8 4 5.5 6.5" stroke="#a8a8a8" stroke-width="1.2" fill="none"/></svg>
<svg class="a" style="left:1264px;top:36px" width="10" height="8" viewBox="0 0 10 8"><path d="M1.5 1.5L4 4 1.5 6.5M5.5 1.5L8 4 5.5 6.5" stroke="#a8a8a8" stroke-width="1.2" fill="none"/></svg>
<div class="a panel" style="left:898px;top:46px;width:37px;height:672px"></div>
<div class="a" style="left:898px;top:114px;width:37px;height:2px;background:#2c2c2c"></div>
<div class="a" style="left:898px;top:212px;width:37px;height:2px;background:#2c2c2c"></div>
<div class="a" style="left:898px;top:252px;width:37px;height:2px;background:#2c2c2c"></div>
<div class="a" style="left:898px;top:293px;width:37px;height:2px;background:#2c2c2c"></div>
<svg class="a" style="left:898px;top:46px" width="37" height="250" viewBox="0 0 37 250">
 <g stroke="#242424" stroke-width="1" stroke-dasharray="1 1.2"><path d="M9.5 5.7h19M9.5 75h19M9.5 171.7h19M9.5 212.7h19"/></g>
 <path d="M20 17c-6.5 0-11 3.3-11 7 0 2.5 2.2 3 4.2 2.6 1.8-.3 2.6.8 3.6 1.6 1.5 1.2 4 1.2 6.5.2 3.5-1.5 5.7-4 5.2-7-.6-3-4-4.4-8.5-4.4z" fill="#c8c8c8"/>
 <g fill="#3a3a3a"><circle cx="13.5" cy="24.5" r="1.4"/><circle cx="17" cy="26.5" r="1.4"/><circle cx="21" cy="26" r="1.4"/><circle cx="24.5" cy="23.5" r="1.4"/><circle cx="25" cy="20" r="1.2"/></g>
 <rect x="11" y="47.2" width="16" height="11" fill="#c8c8c8"/>
 <g fill="#666"><rect x="12.2" y="48.4" width="4" height="3.6"/><rect x="21.6" y="48.4" width="4.2" height="3.6"/><rect x="17" y="53.4" width="4" height="3.6"/></g>
 <g fill="#8a8a8a"><rect x="17" y="48.4" width="4" height="3.6"/><rect x="12.2" y="53.4" width="4" height="3.6"/><rect x="21.6" y="53.4" width="4.2" height="3.6"/></g>
 <rect x="11.8" y="84" width="1.3" height="18" fill="#c8c8c8"/><rect x="14" y="87" width="8" height="5" fill="#c8c8c8"/><rect x="14" y="95.5" width="13" height="5" fill="#c8c8c8"/>
 <circle cx="19.5" cy="121.7" r="8.3" fill="#c8c8c8"/><rect x="18.2" y="119.5" width="2.8" height="6" fill="#333"/><rect x="17.3" y="124.3" width="4.6" height="1.3" fill="#333"/><rect x="17.3" y="119.5" width="2" height="1.2" fill="#333"/><circle cx="19.7" cy="116.6" r="1.5" fill="#333"/>
 <rect x="13.5" y="143" width="11" height="11" fill="none" stroke="#c8c8c8" stroke-width="1.2"/>
 <g fill="#c8c8c8"><rect x="12" y="141.5" width="3" height="3"/><rect x="17.5" y="141.5" width="3" height="2.5"/><rect x="23" y="141.5" width="3" height="3"/><rect x="12" y="147" width="2.5" height="3"/><rect x="23.5" y="147" width="2.5" height="3"/><rect x="12" y="152.5" width="3" height="3"/><rect x="17.5" y="153" width="3" height="2.5"/><rect x="23" y="152.5" width="3" height="3"/><rect x="18.5" y="148" width="1" height="1"/></g>
 <circle cx="13.7" cy="195.7" r="4.2" fill="#c8c8c8"/><circle cx="22.4" cy="189.8" r="3.2" fill="#c8c8c8"/><circle cx="24" cy="182.7" r="2.1" fill="#c8c8c8"/>
 <path d="M12 236c-3.5 0-5-2.5-5-5 0-3 2.5-5.5 6-5.2 1-3.3 4-5.3 7-5.3 3.5 0 6.3 2.5 6.8 5.7 3 .3 4.7 2.5 4.7 5s-2 4.8-5 4.8z" fill="#b8b8b8" stroke="#d0d0d0" stroke-width="1.2"/>
 <path d="M12 233c-2 0-3-1-3-2.5s1.5-2.8 3.5-2.8c2.5 0 4 2 6 3.5 2 1.5 3.5 2 5 2 2 0 3.5-1 3.5-2.8 0-1.8-1.5-2.8-3.3-2.8-2 0-3.6 1.6-5.2 3.1-1.6 1.5-3.5 2.3-6.5 2.3z" fill="none" stroke="#3a3a3a" stroke-width="1.5"/>
</svg>


<!-- ============ PROPERTIES ============ -->
<div class="a" style="left:938px;top:46px;width:300px;height:17px;background:#2d2d2d"></div>
<div class="a panel" style="left:938px;top:46px;width:300px;height:672px;top:63px"></div>
<div class="a panel" style="left:938px;top:47px;width:66px;height:16px"></div>
<div class="a" style="left:945px;top:49px;font-size:10.7px;font-weight:bold;color:#e6e6e6">Properties</div>
<div class="a" style="left:1005px;top:47px;width:48px;height:16px;background:#333"></div>
<div class="a" style="left:1011px;top:49px;font-size:10.7px;font-weight:bold;color:#a8a8a8">Library</div>
<div class="menu" style="left:1221px;top:52px"></div>
<svg class="a" style="left:964px;top:88px" width="22" height="18" viewBox="0 0 22 18"><path d="M3 11L11 2v8" stroke="#c8c8c8" stroke-width="1.3" fill="none"/><rect x="10" y="7" width="7" height="7" fill="#c8c8c8"/><circle cx="8" cy="12" r="3" fill="#3a3a3a" stroke="#c8c8c8" stroke-width="1.3"/></svg>
<div class="field" style="left:1012px;top:102px;width:195px;height:19px"></div>
<div class="ptxt" style="left:1018px;top:105px">Graphic</div>
<svg class="a" style="left:1193px;top:108px" width="10" height="7" viewBox="0 0 10 7"><path d="M1 1l4 4 4-4" stroke="#cfcfcf" stroke-width="1.3" fill="none"/></svg>
<div class="sep" style="left:938px;top:127px;width:300px"></div>
<div class="lbl" style="left:944px;top:138px">Instance of:</div>
<div class="field" style="left:1012px;top:133px;width:133px;height:19px"></div>
<div class="ptxt" style="left:1019px;top:136px">F.HAND</div>
<div class="btn" style="left:1150px;top:133px;width:58px;height:19px;line-height:17px">Swap...</div>
<div class="sep" style="left:938px;top:184.5px;width:300px"></div>
<div class="a" style="left:943px;top:192px;border-left:4.5px solid transparent;border-right:4.5px solid transparent;border-top:6px solid #c8c8c8"></div>
<div class="lbl" style="left:958px;top:189px">Position and Size</div>
<div class="lbl" style="left:996px;top:215px">X:</div><div class="val" style="left:1013px;top:215px">1.50</div>
<div class="lbl" style="left:1114px;top:215px">Y:</div><div class="val" style="left:1131px;top:215px">2.50</div>
<div class="sep" style="left:938px;top:236.5px;width:300px"></div>
<svg class="a" style="left:942px;top:247px" width="16" height="14" viewBox="0 0 16 14"><path d="M6 3.5H4a3 3 0 0 0 0 6h2M10 3.5h2a3 3 0 0 1 0 6h-2M5.5 6.5h5" stroke="#c8c8c8" stroke-width="1.2" fill="none"/><path d="M7 1v1.5M9 1v1.5M7 11v1.5M9 11v1.5" stroke="#c8c8c8" stroke-width="1"/></svg>
<div class="lbl" style="left:993px;top:247px">W:</div><div class="val" style="left:1013px;top:247px">157.00</div>
<div class="lbl" style="left:1112px;top:247px">H:</div><div class="val" style="left:1131px;top:247px">298.00</div>
<div class="sep" style="left:938px;top:271.5px;width:300px"></div>
<div class="a" style="left:946px;top:278px;border-top:4.5px solid transparent;border-bottom:4.5px solid transparent;border-left:6px solid #c8c8c8"></div>
<div class="lbl" style="left:958px;top:276px">Color Effect</div>
<div class="sep" style="left:938px;top:293.5px;width:300px"></div>
<div class="a" style="left:943px;top:302px;border-left:4.5px solid transparent;border-right:4.5px solid transparent;border-top:6px solid #c8c8c8"></div>
<div class="lbl" style="left:958px;top:298px">Looping</div>
<div class="lbl" style="left:958px;top:324px">Options:</div>
<div class="field" style="left:1016px;top:321px;width:188px;height:19px"></div>
<div class="ptxt" style="left:1023px;top:324px">Single Frame</div>
<svg class="a" style="left:1189px;top:327px" width="10" height="7" viewBox="0 0 10 7"><path d="M1 1l4 4 4-4" stroke="#cfcfcf" stroke-width="1.3" fill="none"/></svg>
<div class="lbl" style="left:977px;top:350px">First:</div>
<div class="a" style="left:1015px;top:350px;font-size:12px;color:#d6d6d6;border-bottom:1px dotted #5a8ac0;line-height:13px">3</div>
<svg class="a" style="left:1021px;top:356px" width="14" height="20" viewBox="0 0 14 20"><path d="M2 1v14l3.5-3.3 2.5 5.5 2.2-1-2.5-5.3H12z" fill="#000" stroke="#fff" stroke-width="1.2"/></svg>
<div class="btn" style="left:1016px;top:377px;width:188px;height:18px;line-height:16px">Use Frame Picker...</div>
<div class="btn" style="left:1016px;top:406px;width:188px;height:18px;line-height:16px">Lip Syncing...</div>


<!-- ============ TOOLS ============ -->
<div class="a" style="left:1240px;top:46px;width:38px;height:17px;background:#2d2d2d"></div>
<div class="menu" style="left:1262px;top:52px"></div>
<div class="a panel" style="left:1240px;top:63px;width:38px;height:655px"></div>
<div class="a" style="left:1244px;top:69px;width:30px;height:24px;border-radius:3px;background:#232323"></div>
<svg class="a" style="left:1240px;top:63px" width="38" height="655" viewBox="0 0 38 655">
<g fill="#c8c8c8" stroke="none">
 <path d="M14 10.5 L26 20.5 L19.5 20.5 L14 25.5Z" fill="none" stroke="#d0d0d0" stroke-width="1" stroke-linejoin="miter"/>
 <path d="M14 38 L26 47.5 L19.5 47.5 L14 54.5Z"/>
 <path d="M10 67 L17 73 L12.5 73 L10 78Z"/>
 <rect x="16.5" y="68.5" width="12" height="11" fill="none" stroke="#c8c8c8" stroke-width="1" stroke-dasharray="2 1.5"/>
 <path d="M30 81h2.5v-2.5z"/>
 <circle cx="19" cy="102" r="7.5" fill="#7a7a7a"/><circle cx="19" cy="102" r="7.5" fill="none" stroke="#c8c8c8" stroke-width="1.3"/>
 <path d="M11.5 102a7.5 3 0 0 0 15 0M19 94.5a3 7.5 0 0 1 0 15" fill="none" stroke="#c8c8c8" stroke-width="1"/>
 <path d="M30 109h2.5v-2.5z"/>
 <ellipse cx="19.5" cy="128" rx="7.5" ry="5" fill="none" stroke="#c8c8c8" stroke-width="1.3"/><circle cx="14" cy="133" r="2" fill="none" stroke="#c8c8c8" stroke-width="1.2"/><path d="M14 135c0 2 1 3 2 3" fill="none" stroke="#c8c8c8" stroke-width="1.2"/>
 <path d="M30 137h2.5v-2.5z"/>
 <rect x="4" y="145" width="30" height="1.2" fill="#2c2c2c"/>
 <path d="M12 170 L14 162 L21 155 L26 160 L19 167Z"/><path d="M21 155l2-2 4 4-2 2z"/><circle cx="17" cy="164" r="1.3" fill="#3a3a3a"/><path d="M12 170l4-4" stroke="#3a3a3a" stroke-width="0.8"/>
 <path d="M30 167h2.5v-2.5z"/>
 <path d="M12 183.5h14v3h-1.5v-1.5h-4v11h2v1.5h-7v-1.5h2v-11h-4v1.5H12z"/>
 <path d="M12.5 225 L25.5 211" stroke="#c8c8c8" stroke-width="1.6"/>
 <rect x="12.5" y="239.5" width="13" height="13" fill="#595959" stroke="#c8c8c8" stroke-width="1.3"/>
 <path d="M30 254h2.5v-2.5z"/>
 <ellipse cx="19" cy="274" rx="8" ry="6" fill="#595959" stroke="#c8c8c8" stroke-width="1.3"/>
 <path d="M30 282h2.5v-2.5z"/>
 <path d="M15.5 295h7l3.5 6.5-3.5 6.5h-7L12 301.5z" fill="#5e5e5e" stroke="#c8c8c8" stroke-width="1.2"/>
 <path d="M11.5 338 L13 333 L23 323 L26.5 326.5 L16.5 336.5Z"/><path d="M23 323l1.5-1.5 3.5 3.5-1.5 1.5z"/>
 <path d="M18 360 L26.5 351 L27.5 352 L20 361Z"/><path d="M13 364c2 0 4-2 5-4l2 2c-1 2-3 3-7 3z"/><path d="M15 362c-3-1-4-5-1-7s4-1 5-3" fill="none" stroke="#c8c8c8" stroke-width="1.2"/>
 <path d="M18 388 L26.5 379 L27.5 380 L20 389Z"/><path d="M11.5 394c3 0 5-3 6-5l2.5 2c-1 2-4 4-8.5 3z"/>
 <rect x="4" y="401" width="30" height="1.2" fill="#2c2c2c"/>
 <path d="M14 425l10-10" stroke="#c8c8c8" stroke-width="3"/><circle cx="12.5" cy="423" r="2.3"/><circle cx="15.5" cy="426.5" r="2.3"/><circle cx="22.5" cy="413.5" r="2.3"/><circle cx="25.5" cy="416.5" r="2.3"/>
 <path d="M30 427h2.5v-2.5z"/>
 <path d="M12 449l6-8 7 5-6 8z"/><path d="M19 441c0-3 3-4 5-2l3 4c1 1 0 3-1 2" fill="none" stroke="#c8c8c8" stroke-width="1.3"/>
 <path d="M12 475l4-6 5 4-4 5z"/><path d="M17 469c0-2 2-3 3.5-1.5" fill="none" stroke="#c8c8c8" stroke-width="1.2"/><path d="M20 477h4v-5h3v8h-7z"/>
 <path d="M12 511l9-9 2.5 2.5-9 9z" fill="none" stroke="#c8c8c8" stroke-width="1.3"/><path d="M21 499l3-3a2 2 0 0 1 3 3l-3 3z"/>
 <g transform="rotate(-45 19.5 529)"><rect x="12" y="524" width="15" height="10" rx="1" fill="none" stroke="#c8c8c8" stroke-width="1.3"/><rect x="17" y="524" width="10" height="10" fill="#c8c8c8"/></g>
 <path d="M13 560c3-5 6-1 8-6s5-3 6-1c-1 1-3 0-4 3-1 4-4 6-7 6" fill="none" stroke="#c8c8c8" stroke-width="1.6"/><circle cx="15" cy="557" r="2" fill="none" stroke="#c8c8c8" stroke-width="1"/><circle cx="13" cy="563" r="1.3" fill="none" stroke="#c8c8c8" stroke-width="0.8"/>
 <path d="M12 592l6-6" stroke="#c8c8c8" stroke-width="1.5"/><path d="M17 580l4-4 8 8-4 4zM16 583l9 9-2 1-8-8z"/>
 <rect x="4" y="601" width="30" height="1.2" fill="#2c2c2c"/>
 <rect x="12" y="613.5" width="10" height="10" rx="1" fill="#5e5e5e"/><path d="M22 618.5l5-4v9z" fill="#5e5e5e"/>
 <path d="M14 648c-2-3-3-6-1.5-6.5s3 2 3 2v-8.5c0-1.3 2-1.3 2 0v7-8.5c0-1.3 2-1.3 2 0v8.5-7.5c0-1.3 2-1.3 2 0v7.5-5.5c0-1.3 2-1.3 2 0v8c0 4-2 6-5.5 6h-2c-2 0-3-1-3.5-2z"/>
 <path d="M30 654h2.5v-2.5z"/>
</g>
</svg>

<div class="a" style="left:1278px;top:0px;width:2px;height:720px;background:#1e1e1e"></div>
</body></html>
